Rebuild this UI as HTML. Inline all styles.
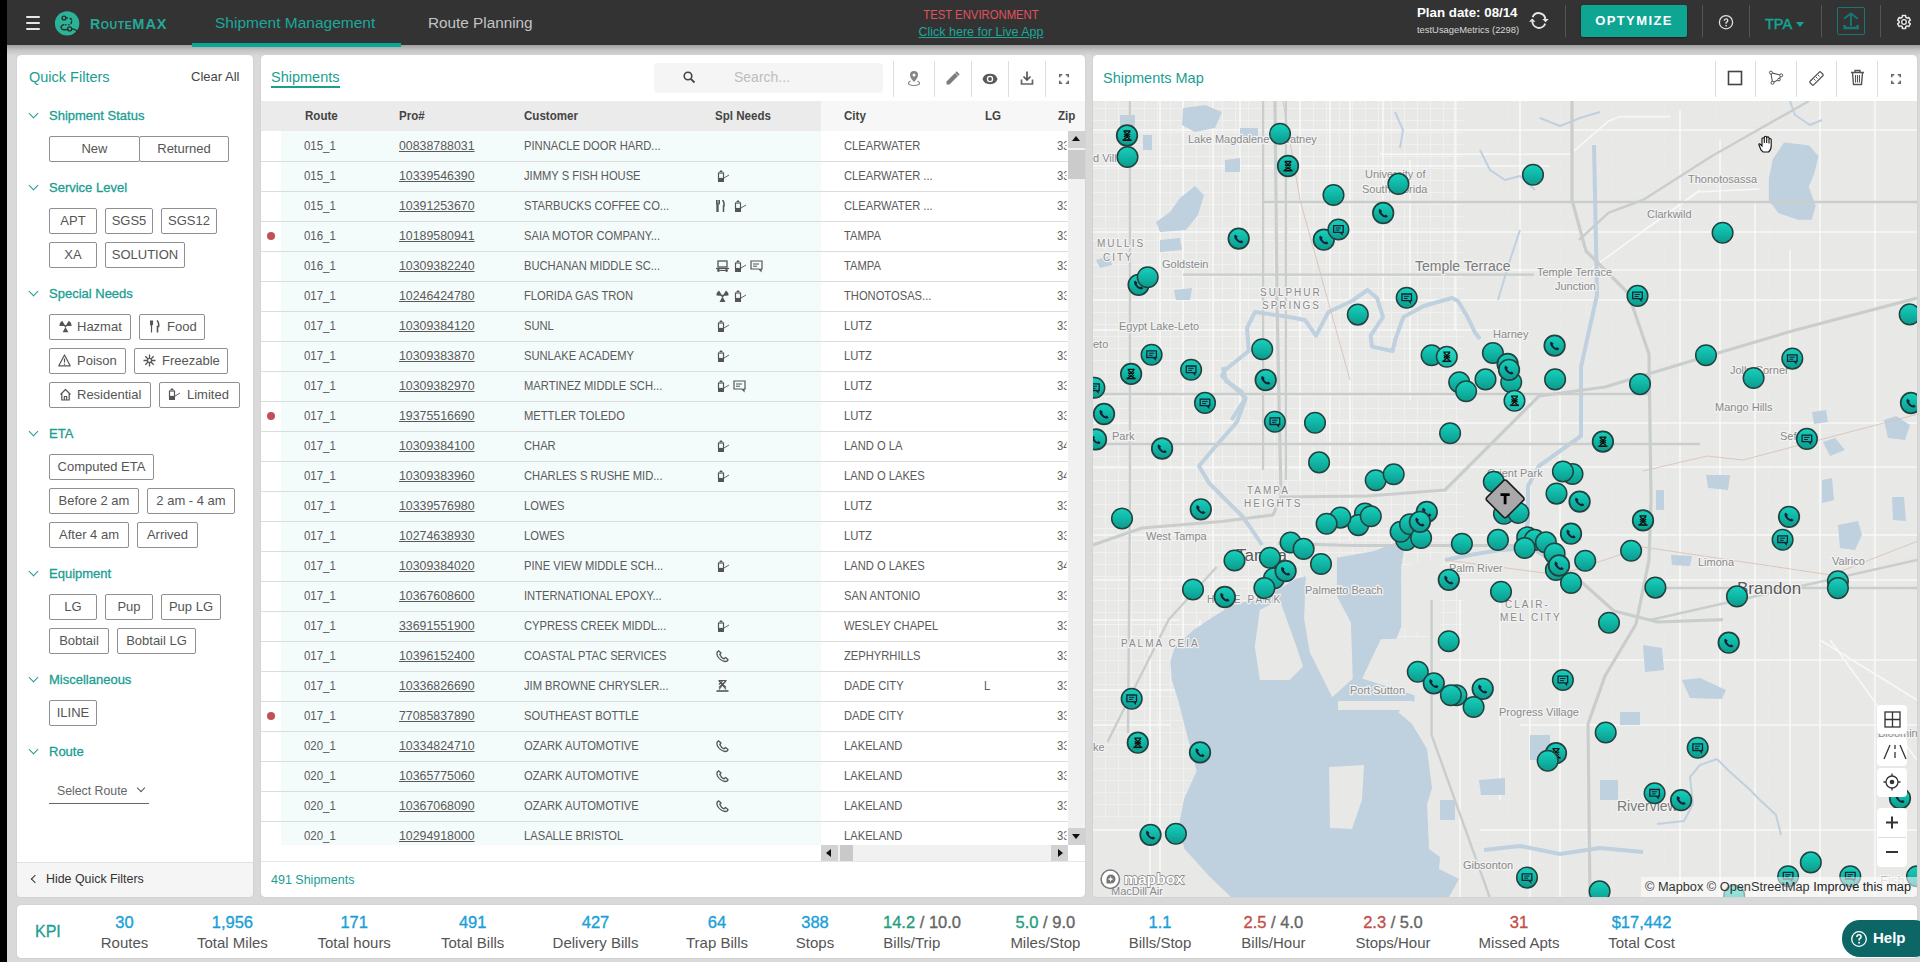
<!DOCTYPE html>
<html><head><meta charset="utf-8">
<style>
*{box-sizing:border-box;margin:0;padding:0}
html,body{width:1920px;height:962px;overflow:hidden}
body{background:#d9d9d9;font-family:"Liberation Sans",sans-serif;position:relative;color:#555}
.a{position:absolute;white-space:nowrap}
#strip{left:0;top:0;width:7px;height:962px;background:#000}
#hdr{left:7px;top:0;width:1913px;height:45px;background:#333}
#hshadow{left:7px;top:45px;width:1913px;height:10px;background:linear-gradient(#9e9e9e,#c4c4c4 50%,#d6d6d6)}
.panel{background:#fff;border-radius:4px;box-shadow:0 0 1px rgba(0,0,0,.25)}
.sep{position:absolute;width:1px;background:#555}
.btn{position:absolute;border:1px solid #8f8f8f;border-radius:2px;font-size:13px;color:#555;text-align:center;line-height:23px;height:26px;white-space:nowrap}
.sh{position:absolute;-webkit-text-stroke:0.3px;font-size:13px;font-weight:normal;color:#1a9e92;white-space:nowrap}
.chev{position:absolute;width:7px;height:7px;border-right:1.5px solid #1a9e92;border-bottom:1.5px solid #1a9e92;transform:rotate(45deg)}
.td{font-size:13px;color:#5a5a5a;line-height:16px;transform:scaleX(0.86);transform-origin:0 50%}
.pro{text-decoration:underline;transform:scaleX(0.95)}
.rt{transform:scaleX(0.88)}
.th{font-size:13px;font-weight:bold;color:#444;line-height:17px;transform:scaleX(0.89);transform-origin:0 50%}
.kv{position:absolute;-webkit-text-stroke:0.35px;font-size:16.5px;line-height:18px;color:#1a9fd9;text-align:center;width:160px;white-space:nowrap}
.kl{position:absolute;font-size:15px;line-height:17px;color:#555;text-align:center;width:160px;white-space:nowrap}
</style></head><body>
<div class="a" id="strip"></div>
<div class="a" id="hdr"></div>
<div class="a" id="hshadow"></div>


<!-- HEADER CONTENT -->
<div class="a" style="left:26px;top:16px;width:14px;height:2px;background:#e6e6e6;border-radius:1px"></div>
<div class="a" style="left:26px;top:22px;width:14px;height:2px;background:#e6e6e6;border-radius:1px"></div>
<div class="a" style="left:26px;top:28px;width:14px;height:2px;background:#e6e6e6;border-radius:1px"></div>
<svg class="a" style="left:54px;top:10px" width="26" height="26" viewBox="0 0 26 26">
 <circle cx="13.1" cy="13.4" r="12.2" fill="#2bb398"/>
 <g fill="none" stroke="#2a2f2e" stroke-width="1.4" stroke-linecap="round">
  <circle cx="10" cy="8" r="1.9"/><circle cx="15.7" cy="18.9" r="2"/>
  <path d="M12.4 7.9 L13.4 8 M16.2 8.4 L17.5 9.4 M17.6 11.3 L17.1 13.5"/>
  <path d="M11.6 14.7 L12 14.7 M14.8 14.7 L15.2 14.7"/>
  <path d="M9.8 14.6 Q7 15.4 7 17.6 Q7.6 19.6 10 19.7 L13.6 19.5"/>
  <path d="M17.8 18.9 Q22 19.2 23.4 21.6 L24.2 23"/>
 </g>
</svg>
<div class="a" id="logo" style="left:90px;top:15px;font-size:14px;font-weight:bold;color:#26a899;letter-spacing:0.6px;line-height:18px">R<span style="font-size:10.5px">OUTE</span><span style="font-size:14.5px;letter-spacing:1px">MAX</span></div>
<div class="a" id="tab1" style="left:215px;top:13px;font-size:15.5px;color:#1ba89a;line-height:20px">Shipment Management</div>
<div class="a" style="left:192px;top:43px;width:209px;height:4px;background:#05a795"></div>
<div class="a" id="tab2" style="left:428px;top:13px;font-size:15.3px;color:#c4c4c4;line-height:20px">Route Planning</div>
<div class="a" id="testenv" style="left:901px;top:7px;width:160px;text-align:center;font-size:13px;color:#e0525e;line-height:15px;transform:scaleX(0.87)">TEST ENVIRONMENT</div>
<div class="a" id="live" style="left:901px;top:24px;width:160px;text-align:center;font-size:13px;color:#1ba89a;text-decoration:underline;line-height:16px;transform:scaleX(0.96)">Click here for Live App</div>
<div class="a" id="plan" style="left:1417px;top:5px;font-size:13.3px;font-weight:bold;color:#fff;line-height:16px">Plan date: 08/14</div>
<div class="a" id="usage" style="left:1417px;top:24px;font-size:9.4px;color:#d8d8d8;line-height:12px">testUsageMetrics (2298)</div>
<svg class="a" style="left:1529px;top:12px" width="21" height="18" viewBox="0 0 21 18">
 <g fill="none" stroke="#e6e6e6" stroke-width="1.9"><path d="M3.6 5.2 A6.6 6.6 0 0 1 16.3 7.6"/><path d="M16.2 11.6 A6.6 6.6 0 0 1 3.4 9.6"/></g>
 <path d="M13.3 7.1 H19.8 L16.5 10.2Z M0 9.7 H6.5 L3.2 6.6Z" fill="#e6e6e6"/>
</svg>
<div class="sep" style="left:1565px;top:5px;height:32px"></div>
<div class="a" style="left:1581px;top:5px;width:106px;height:32px;background:#0ea593;border-radius:2px;box-shadow:0 1px 2px rgba(0,0,0,.4)"></div>
<div class="a" id="opt" style="left:1581px;top:5px;width:106px;height:32px;text-align:center;line-height:32px;font-size:13px;font-weight:bold;color:#fff;letter-spacing:1.4px">OPTYMIZE</div>
<div class="sep" style="left:1702px;top:5px;height:32px"></div>
<svg class="a" style="left:1717px;top:14px" width="18" height="18" viewBox="0 0 18 18">
 <circle cx="9" cy="8.2" r="6.6" fill="none" stroke="#e0e0e0" stroke-width="1.3"/>
 <path d="M7.2 6.8 Q7.3 4.9 9 4.9 Q10.8 4.9 10.8 6.6 Q10.8 7.8 9.2 8.5 L9.1 9.8" fill="none" stroke="#e0e0e0" stroke-width="1.4"/>
 <circle cx="9.1" cy="11.6" r="0.85" fill="#e0e0e0"/>
</svg>
<div class="sep" style="left:1749px;top:5px;height:32px"></div>
<div class="a" id="tpa" style="left:1765px;top:15px;font-size:14.5px;color:#14a596;line-height:18px;-webkit-text-stroke:0.45px">TPA</div>
<div class="a" style="left:1796px;top:22px;width:0;height:0;border-left:4px solid transparent;border-right:4px solid transparent;border-top:5px solid #14a596"></div>
<div class="sep" style="left:1821px;top:5px;height:32px"></div>
<div class="a" style="left:1837px;top:7px;width:28px;height:28px;border:1.4px solid #177676;border-radius:1.5px"></div>
<svg class="a" style="left:1837px;top:7px" width="28" height="28" viewBox="1837 7 28 28">
 <g fill="none" stroke="#177676" stroke-width="2" stroke-linecap="round"><path d="M1850.9 13.8 V25.2 M1844.6 18.2 L1850.9 13.4 L1857.2 18.2"/></g>
 <path d="M1844.6 25 V28 H1857.6 V25" fill="none" stroke="#177676" stroke-width="2.6"/>
</svg>
<div class="sep" style="left:1880px;top:5px;height:32px"></div>
<svg class="a" style="left:1895px;top:13px" width="18" height="18" viewBox="0 0 18 18">
 <path d="M7.16 4.46 L7.40 2.60 L10.60 2.60 L10.84 4.46 L12.02 5.14 L13.75 4.42 L15.34 7.18 L13.85 8.32 L13.85 9.68 L15.34 10.82 L13.75 13.58 L12.02 12.86 L10.84 13.54 L10.60 15.40 L7.40 15.40 L7.16 13.54 L5.98 12.86 L4.25 13.58 L2.66 10.82 L4.15 9.68 L4.15 8.32 L2.66 7.18 L4.25 4.42 L5.98 5.14Z" fill="none" stroke="#e8e8e8" stroke-width="1.5" stroke-linejoin="round"/>
 <circle cx="9" cy="9" r="2.3" fill="none" stroke="#e8e8e8" stroke-width="1.3"/><circle cx="9" cy="9" r="0.9" fill="#111"/>
</svg>

<!-- LEFT PANEL -->
<div class="a panel" style="left:17px;top:55px;width:236px;height:842px"></div>

<!-- LEFT CONTENT -->

<div class="a" style="left:29px;top:68px;font-size:14.5px;color:#1a9e92;line-height:18px">Quick Filters</div>
<div class="a" style="left:191px;top:69px;font-size:13px;color:#444;line-height:16px">Clear All</div>
<div class="chev" style="left:30px;top:110px"></div><div class="sh" style="left:49px;top:107px;line-height:17px">Shipment Status</div>
<div class="btn" style="left:49px;top:136px;width:91px">New</div><div class="btn" style="left:139px;top:136px;width:90px">Returned</div>
<div class="chev" style="left:30px;top:182px"></div><div class="sh" style="left:49px;top:179px;line-height:17px">Service Level</div>
<div class="btn" style="left:49px;top:208px;width:48px">APT</div>
<div class="btn" style="left:105px;top:208px;width:48px">SGS5</div>
<div class="btn" style="left:161px;top:208px;width:56px">SGS12</div>
<div class="btn" style="left:49px;top:242px;width:48px">XA</div>
<div class="btn" style="left:105px;top:242px;width:80px">SOLUTION</div>
<div class="chev" style="left:30px;top:288px"></div><div class="sh" style="left:49px;top:285px;line-height:17px">Special Needs</div>
<div class="btn" style="left:49px;top:314px;width:82px"></div>
<svg class="a" style="left:59px;top:320px" width="13" height="13" viewBox="0 0 13 13"><g fill="#555"><path d="M6.5 6 L3.2 0.8 Q0.5 2.3 0.4 6Z M6.5 6 L9.8 0.8 Q12.5 2.3 12.6 6Z M6.5 7 L3.6 12.2 H9.4Z"/><circle cx="6.5" cy="6.3" r="1.1"/></g></svg><div class="a" style="left:77px;top:319px;font-size:13px;color:#555;line-height:16px">Hazmat</div>
<div class="btn" style="left:139px;top:314px;width:66px"></div>
<svg class="a" style="left:150px;top:320px" width="10" height="13" viewBox="0 0 10 13"><path d="M1.5 0.5 V12.5 M0.5 0.5 V4 Q0.5 5 1.5 5 Q2.5 5 2.5 4 V0.5" stroke="#555" stroke-width="1.2" fill="none"/><path d="M7 0.5 Q9.2 2.5 8.6 6.5 H7.5 V12.5" stroke="#555" stroke-width="1.6" fill="none"/></svg><div class="a" style="left:167px;top:319px;font-size:13px;color:#555;line-height:16px">Food</div>
<div class="btn" style="left:49px;top:348px;width:77px"></div>
<svg class="a" style="left:58px;top:354px" width="13" height="13" viewBox="0 0 13 13"><path d="M6.5 1 L12.2 11.8 H0.8Z" fill="none" stroke="#555" stroke-width="1.2" stroke-linejoin="round"/><path d="M6.5 4.5 V8.5" stroke="#555" stroke-width="1.2"/><circle cx="6.5" cy="10.2" r="0.7" fill="#555"/></svg><div class="a" style="left:77px;top:353px;font-size:13px;color:#555;line-height:16px">Poison</div>
<div class="btn" style="left:134px;top:348px;width:94px"></div>
<svg class="a" style="left:143px;top:354px" width="13" height="13" viewBox="0 0 13 13"><path d="M6.5 0.5 V12.5 M0.5 6.5 H12.5 M2.3 2.3 L10.7 10.7 M10.7 2.3 L2.3 10.7" stroke="#555" stroke-width="1.3"/><circle cx="6.5" cy="6.5" r="2" fill="#fff" stroke="#555" stroke-width="1.2"/></svg><div class="a" style="left:162px;top:353px;font-size:13px;color:#555;line-height:16px">Freezable</div>
<div class="btn" style="left:49px;top:382px;width:102px"></div>
<svg class="a" style="left:59px;top:388px" width="13" height="13" viewBox="0 0 13 13"><path d="M1.5 6.5 L6.5 1.5 L11.5 6.5 M2.8 5.5 V12 H10.2 V5.5 M5.3 12 V8.5 H7.7 V12" fill="none" stroke="#555" stroke-width="1.2" stroke-linejoin="round"/></svg><div class="a" style="left:77px;top:387px;font-size:13px;color:#555;line-height:16px">Residential</div>
<div class="btn" style="left:159px;top:382px;width:81px"></div>
<svg class="a" style="left:167px;top:388px" width="14" height="13" viewBox="0 0 14 13"><use href="#lim"/></svg><div class="a" style="left:187px;top:387px;font-size:13px;color:#555;line-height:16px">Limited</div>
<div class="chev" style="left:30px;top:428px"></div><div class="sh" style="left:49px;top:425px;line-height:17px">ETA</div>
<div class="btn" style="left:49px;top:454px;width:105px">Computed ETA</div>
<div class="btn" style="left:49px;top:488px;width:90px">Before 2 am</div>
<div class="btn" style="left:147px;top:488px;width:88px">2 am - 4 am</div>
<div class="btn" style="left:49px;top:522px;width:80px">After 4 am</div>
<div class="btn" style="left:137px;top:522px;width:61px">Arrived</div>
<div class="chev" style="left:30px;top:568px"></div><div class="sh" style="left:49px;top:565px;line-height:17px">Equipment</div>
<div class="btn" style="left:49px;top:594px;width:48px">LG</div>
<div class="btn" style="left:105px;top:594px;width:48px">Pup</div>
<div class="btn" style="left:161px;top:594px;width:60px">Pup LG</div>
<div class="btn" style="left:49px;top:628px;width:60px">Bobtail</div>
<div class="btn" style="left:117px;top:628px;width:79px">Bobtail LG</div>
<div class="chev" style="left:30px;top:674px"></div><div class="sh" style="left:49px;top:671px;line-height:17px">Miscellaneous</div>
<div class="btn" style="left:49px;top:700px;width:48px">ILINE</div>
<div class="chev" style="left:30px;top:746px"></div><div class="sh" style="left:49px;top:743px;line-height:17px">Route</div>
<div class="a" style="left:57px;top:783px;font-size:12.3px;color:#666;line-height:16px">Select Route</div>
<div class="a" style="left:138px;top:785px;width:6px;height:6px;border-right:1.4px solid #555;border-bottom:1.4px solid #555;transform:rotate(45deg)"></div>
<div class="a" style="left:49px;top:803px;width:100px;height:1px;background:#666"></div>
<div class="a" style="left:17px;top:862px;width:236px;height:35px;background:#f5f5f5;border-top:1px solid #e0e0e0;border-radius:0 0 4px 4px"></div>
<div class="a" style="left:32px;top:876px;width:6px;height:6px;border-left:1.5px solid #333;border-bottom:1.5px solid #333;transform:rotate(45deg)"></div>
<div class="a" style="left:46px;top:871px;font-size:12.4px;color:#333;line-height:16px">Hide Quick Filters</div>

<!-- TABLE PANEL -->
<div class="a panel" style="left:261px;top:55px;width:824px;height:842px"></div>

<!-- TABLE CONTENT -->
<svg width="0" height="0" style="position:absolute">
<defs>
<g id="lim"><path d="M5 0 L7 2 L3 2Z" fill="#555"/><rect x="2.5" y="3" width="5" height="5.5" fill="none" stroke="#555" stroke-width="1.2"/><rect x="2" y="8.5" width="6" height="3.5" fill="#555"/><path d="M8 8 L13 5" stroke="#555" stroke-width="0.9"/></g>
<g id="food"><path d="M1 0 V12 M3 0 V4 M2 4 V12" stroke="#555" stroke-width="1.3"/><path d="M0.5 0 V4 H3.5 V0" fill="none" stroke="#555" stroke-width="1"/><path d="M6.5 0 Q8.5 2 8 6 L7.5 6 V12" stroke="#555" stroke-width="1.5" fill="none"/></g>
<g id="bus"><rect x="2" y="1" width="9" height="6" fill="none" stroke="#555" stroke-width="1.3"/><path d="M0 8.5 H13" stroke="#555" stroke-width="1.3"/><circle cx="2.5" cy="10.5" r="1.4" fill="#555"/><circle cx="10.5" cy="10.5" r="1.4" fill="#555"/><path d="M4 10.5 H9" stroke="#555" stroke-width="1"/></g>
<g id="msg"><path d="M1 1 H12 V9 H11 V11 L9 9 H1Z" fill="none" stroke="#555" stroke-width="1.2"/><path d="M3 4 H9 M3 6.2 H7" stroke="#555" stroke-width="1"/></g>
<g id="haz" fill="#555"><path d="M6.5 6 L3 0.5 Q0.5 2 0.5 5.5Z M6.5 6 L10 0.5 Q12.5 2 12.5 5.5Z M6.5 6.5 L3.5 12 H9.5Z"/><circle cx="6.5" cy="6" r="1.2"/></g>
<g id="phone"><path d="M2.5 0.8 Q0 2 1.5 6 Q4 10.5 9 11.5 Q11.8 11.5 12 9.5 L9.5 7.5 L8 8.8 Q5 7.5 3.8 4.5 L5 3 Z" fill="none" stroke="#555" stroke-width="1.3" stroke-linejoin="round"/></g>
<g id="hg"><path d="M2.5 0.5 H10.5 M3 1 L10 7.5 M10 1 L3 7.5 M3 7.5 L6.5 4 L10 7.5 M3 4.5 L6.5 1" stroke="#555" stroke-width="1.2" fill="none"/><path d="M0.5 11 H12.5" stroke="#555" stroke-width="1.6"/><path d="M3 0.5 L10 9.5 M10 0.5 L3 9.5" stroke="#555" stroke-width="1.1" fill="none"/></g>
</defs></svg>
<div class="a" style="left:261px;top:101px;width:560px;height:30px;background:#ebebeb"></div>
<div class="a" style="left:821px;top:101px;width:264px;height:30px;background:#f7f7f7"></div>
<div class="a" style="left:281px;top:131px;width:540px;height:714px;background:#f4fbfb"></div>
<div class="a th" style="left:305px;top:107px">Route</div>
<div class="a th" style="left:399px;top:107px">Pro#</div>
<div class="a th" style="left:524px;top:107px">Customer</div>
<div class="a th" style="left:715px;top:107px">Spl Needs</div>
<div class="a th" style="left:844px;top:107px">City</div>
<div class="a th" style="left:985px;top:107px">LG</div>
<div class="a th" style="left:1058px;top:107px">Zip</div>
<div class="a" style="left:261px;top:161px;width:807px;height:1px;background:#dcdcdc"></div>
<div class="a td rt" style="left:304px;top:138px">015_1</div>
<div class="a td pro" style="left:399px;top:138px">00838788031</div>
<div class="a td" style="left:524px;top:138px">PINNACLE DOOR HARD...</div>
<div class="a td" style="left:844px;top:138px">CLEARWATER</div>
<div class="a td" style="left:1057px;top:138px;width:11px;overflow:hidden">33</div>
<div class="a" style="left:261px;top:191px;width:807px;height:1px;background:#dcdcdc"></div>
<div class="a td rt" style="left:304px;top:168px">015_1</div>
<div class="a td pro" style="left:399px;top:168px">10339546390</div>
<div class="a td" style="left:524px;top:168px">JIMMY S FISH HOUSE</div>
<svg class="a" style="left:716px;top:170px" width="14" height="13"><use href="#lim"/></svg>
<div class="a td" style="left:844px;top:168px">CLEARWATER ...</div>
<div class="a td" style="left:1057px;top:168px;width:11px;overflow:hidden">33</div>
<div class="a" style="left:261px;top:221px;width:807px;height:1px;background:#dcdcdc"></div>
<div class="a td rt" style="left:304px;top:198px">015_1</div>
<div class="a td pro" style="left:399px;top:198px">10391253670</div>
<div class="a td" style="left:524px;top:198px">STARBUCKS COFFEE CO...</div>
<svg class="a" style="left:716px;top:200px" width="14" height="13"><use href="#food"/></svg>
<svg class="a" style="left:733px;top:200px" width="14" height="13"><use href="#lim"/></svg>
<div class="a td" style="left:844px;top:198px">CLEARWATER ...</div>
<div class="a td" style="left:1057px;top:198px;width:11px;overflow:hidden">33</div>
<div class="a" style="left:261px;top:251px;width:807px;height:1px;background:#dcdcdc"></div>
<div class="a" style="left:267px;top:232px;width:8px;height:8px;border-radius:50%;background:#c0505a"></div>
<div class="a td rt" style="left:304px;top:228px">016_1</div>
<div class="a td pro" style="left:399px;top:228px">10189580941</div>
<div class="a td" style="left:524px;top:228px">SAIA MOTOR COMPANY...</div>
<div class="a td" style="left:844px;top:228px">TAMPA</div>
<div class="a td" style="left:1057px;top:228px;width:11px;overflow:hidden">33</div>
<div class="a" style="left:261px;top:281px;width:807px;height:1px;background:#dcdcdc"></div>
<div class="a td rt" style="left:304px;top:258px">016_1</div>
<div class="a td pro" style="left:399px;top:258px">10309382240</div>
<div class="a td" style="left:524px;top:258px">BUCHANAN MIDDLE SC...</div>
<svg class="a" style="left:716px;top:260px" width="14" height="13"><use href="#bus"/></svg>
<svg class="a" style="left:733px;top:260px" width="14" height="13"><use href="#lim"/></svg>
<svg class="a" style="left:750px;top:260px" width="14" height="13"><use href="#msg"/></svg>
<div class="a td" style="left:844px;top:258px">TAMPA</div>
<div class="a td" style="left:1057px;top:258px;width:11px;overflow:hidden">33</div>
<div class="a" style="left:261px;top:311px;width:807px;height:1px;background:#dcdcdc"></div>
<div class="a td rt" style="left:304px;top:288px">017_1</div>
<div class="a td pro" style="left:399px;top:288px">10246424780</div>
<div class="a td" style="left:524px;top:288px">FLORIDA GAS TRON</div>
<svg class="a" style="left:716px;top:290px" width="14" height="13"><use href="#haz"/></svg>
<svg class="a" style="left:733px;top:290px" width="14" height="13"><use href="#lim"/></svg>
<div class="a td" style="left:844px;top:288px">THONOTOSAS...</div>
<div class="a td" style="left:1057px;top:288px;width:11px;overflow:hidden">33</div>
<div class="a" style="left:261px;top:341px;width:807px;height:1px;background:#dcdcdc"></div>
<div class="a td rt" style="left:304px;top:318px">017_1</div>
<div class="a td pro" style="left:399px;top:318px">10309384120</div>
<div class="a td" style="left:524px;top:318px">SUNL</div>
<svg class="a" style="left:716px;top:320px" width="14" height="13"><use href="#lim"/></svg>
<div class="a td" style="left:844px;top:318px">LUTZ</div>
<div class="a td" style="left:1057px;top:318px;width:11px;overflow:hidden">33</div>
<div class="a" style="left:261px;top:371px;width:807px;height:1px;background:#dcdcdc"></div>
<div class="a td rt" style="left:304px;top:348px">017_1</div>
<div class="a td pro" style="left:399px;top:348px">10309383870</div>
<div class="a td" style="left:524px;top:348px">SUNLAKE ACADEMY</div>
<svg class="a" style="left:716px;top:350px" width="14" height="13"><use href="#lim"/></svg>
<div class="a td" style="left:844px;top:348px">LUTZ</div>
<div class="a td" style="left:1057px;top:348px;width:11px;overflow:hidden">33</div>
<div class="a" style="left:261px;top:401px;width:807px;height:1px;background:#dcdcdc"></div>
<div class="a td rt" style="left:304px;top:378px">017_1</div>
<div class="a td pro" style="left:399px;top:378px">10309382970</div>
<div class="a td" style="left:524px;top:378px">MARTINEZ MIDDLE SCH...</div>
<svg class="a" style="left:716px;top:380px" width="14" height="13"><use href="#lim"/></svg>
<svg class="a" style="left:733px;top:380px" width="14" height="13"><use href="#msg"/></svg>
<div class="a td" style="left:844px;top:378px">LUTZ</div>
<div class="a td" style="left:1057px;top:378px;width:11px;overflow:hidden">33</div>
<div class="a" style="left:261px;top:431px;width:807px;height:1px;background:#dcdcdc"></div>
<div class="a" style="left:267px;top:412px;width:8px;height:8px;border-radius:50%;background:#c0505a"></div>
<div class="a td rt" style="left:304px;top:408px">017_1</div>
<div class="a td pro" style="left:399px;top:408px">19375516690</div>
<div class="a td" style="left:524px;top:408px">METTLER TOLEDO</div>
<div class="a td" style="left:844px;top:408px">LUTZ</div>
<div class="a td" style="left:1057px;top:408px;width:11px;overflow:hidden">33</div>
<div class="a" style="left:261px;top:461px;width:807px;height:1px;background:#dcdcdc"></div>
<div class="a td rt" style="left:304px;top:438px">017_1</div>
<div class="a td pro" style="left:399px;top:438px">10309384100</div>
<div class="a td" style="left:524px;top:438px">CHAR</div>
<svg class="a" style="left:716px;top:440px" width="14" height="13"><use href="#lim"/></svg>
<div class="a td" style="left:844px;top:438px">LAND O LA</div>
<div class="a td" style="left:1057px;top:438px;width:11px;overflow:hidden">34</div>
<div class="a" style="left:261px;top:491px;width:807px;height:1px;background:#dcdcdc"></div>
<div class="a td rt" style="left:304px;top:468px">017_1</div>
<div class="a td pro" style="left:399px;top:468px">10309383960</div>
<div class="a td" style="left:524px;top:468px">CHARLES S RUSHE MID...</div>
<svg class="a" style="left:716px;top:470px" width="14" height="13"><use href="#lim"/></svg>
<div class="a td" style="left:844px;top:468px">LAND O LAKES</div>
<div class="a td" style="left:1057px;top:468px;width:11px;overflow:hidden">34</div>
<div class="a" style="left:261px;top:521px;width:807px;height:1px;background:#dcdcdc"></div>
<div class="a td rt" style="left:304px;top:498px">017_1</div>
<div class="a td pro" style="left:399px;top:498px">10339576980</div>
<div class="a td" style="left:524px;top:498px">LOWES</div>
<div class="a td" style="left:844px;top:498px">LUTZ</div>
<div class="a td" style="left:1057px;top:498px;width:11px;overflow:hidden">33</div>
<div class="a" style="left:261px;top:551px;width:807px;height:1px;background:#dcdcdc"></div>
<div class="a td rt" style="left:304px;top:528px">017_1</div>
<div class="a td pro" style="left:399px;top:528px">10274638930</div>
<div class="a td" style="left:524px;top:528px">LOWES</div>
<div class="a td" style="left:844px;top:528px">LUTZ</div>
<div class="a td" style="left:1057px;top:528px;width:11px;overflow:hidden">33</div>
<div class="a" style="left:261px;top:581px;width:807px;height:1px;background:#dcdcdc"></div>
<div class="a td rt" style="left:304px;top:558px">017_1</div>
<div class="a td pro" style="left:399px;top:558px">10309384020</div>
<div class="a td" style="left:524px;top:558px">PINE VIEW MIDDLE SCH...</div>
<svg class="a" style="left:716px;top:560px" width="14" height="13"><use href="#lim"/></svg>
<div class="a td" style="left:844px;top:558px">LAND O LAKES</div>
<div class="a td" style="left:1057px;top:558px;width:11px;overflow:hidden">34</div>
<div class="a" style="left:261px;top:611px;width:807px;height:1px;background:#dcdcdc"></div>
<div class="a td rt" style="left:304px;top:588px">017_1</div>
<div class="a td pro" style="left:399px;top:588px">10367608600</div>
<div class="a td" style="left:524px;top:588px">INTERNATIONAL EPOXY...</div>
<div class="a td" style="left:844px;top:588px">SAN ANTONIO</div>
<div class="a td" style="left:1057px;top:588px;width:11px;overflow:hidden">33</div>
<div class="a" style="left:261px;top:641px;width:807px;height:1px;background:#dcdcdc"></div>
<div class="a td rt" style="left:304px;top:618px">017_1</div>
<div class="a td pro" style="left:399px;top:618px">33691551900</div>
<div class="a td" style="left:524px;top:618px">CYPRESS CREEK MIDDL...</div>
<svg class="a" style="left:716px;top:620px" width="14" height="13"><use href="#lim"/></svg>
<div class="a td" style="left:844px;top:618px">WESLEY CHAPEL</div>
<div class="a td" style="left:1057px;top:618px;width:11px;overflow:hidden">33</div>
<div class="a" style="left:261px;top:671px;width:807px;height:1px;background:#dcdcdc"></div>
<div class="a td rt" style="left:304px;top:648px">017_1</div>
<div class="a td pro" style="left:399px;top:648px">10396152400</div>
<div class="a td" style="left:524px;top:648px">COASTAL PTAC SERVICES</div>
<svg class="a" style="left:716px;top:650px" width="14" height="13"><use href="#phone"/></svg>
<div class="a td" style="left:844px;top:648px">ZEPHYRHILLS</div>
<div class="a td" style="left:1057px;top:648px;width:11px;overflow:hidden">33</div>
<div class="a" style="left:261px;top:701px;width:807px;height:1px;background:#dcdcdc"></div>
<div class="a td rt" style="left:304px;top:678px">017_1</div>
<div class="a td pro" style="left:399px;top:678px">10336826690</div>
<div class="a td" style="left:524px;top:678px">JIM BROWNE CHRYSLER...</div>
<svg class="a" style="left:716px;top:680px" width="14" height="13"><use href="#hg"/></svg>
<div class="a td" style="left:844px;top:678px">DADE CITY</div>
<div class="a td" style="left:984px;top:678px">L</div>
<div class="a td" style="left:1057px;top:678px;width:11px;overflow:hidden">33</div>
<div class="a" style="left:261px;top:731px;width:807px;height:1px;background:#dcdcdc"></div>
<div class="a" style="left:267px;top:712px;width:8px;height:8px;border-radius:50%;background:#c0505a"></div>
<div class="a td rt" style="left:304px;top:708px">017_1</div>
<div class="a td pro" style="left:399px;top:708px">77085837890</div>
<div class="a td" style="left:524px;top:708px">SOUTHEAST BOTTLE</div>
<div class="a td" style="left:844px;top:708px">DADE CITY</div>
<div class="a td" style="left:1057px;top:708px;width:11px;overflow:hidden">33</div>
<div class="a" style="left:261px;top:761px;width:807px;height:1px;background:#dcdcdc"></div>
<div class="a td rt" style="left:304px;top:738px">020_1</div>
<div class="a td pro" style="left:399px;top:738px">10334824710</div>
<div class="a td" style="left:524px;top:738px">OZARK AUTOMOTIVE</div>
<svg class="a" style="left:716px;top:740px" width="14" height="13"><use href="#phone"/></svg>
<div class="a td" style="left:844px;top:738px">LAKELAND</div>
<div class="a td" style="left:1057px;top:738px;width:11px;overflow:hidden">33</div>
<div class="a" style="left:261px;top:791px;width:807px;height:1px;background:#dcdcdc"></div>
<div class="a td rt" style="left:304px;top:768px">020_1</div>
<div class="a td pro" style="left:399px;top:768px">10365775060</div>
<div class="a td" style="left:524px;top:768px">OZARK AUTOMOTIVE</div>
<svg class="a" style="left:716px;top:770px" width="14" height="13"><use href="#phone"/></svg>
<div class="a td" style="left:844px;top:768px">LAKELAND</div>
<div class="a td" style="left:1057px;top:768px;width:11px;overflow:hidden">33</div>
<div class="a" style="left:261px;top:821px;width:807px;height:1px;background:#dcdcdc"></div>
<div class="a td rt" style="left:304px;top:798px">020_1</div>
<div class="a td pro" style="left:399px;top:798px">10367068090</div>
<div class="a td" style="left:524px;top:798px">OZARK AUTOMOTIVE</div>
<svg class="a" style="left:716px;top:800px" width="14" height="13"><use href="#phone"/></svg>
<div class="a td" style="left:844px;top:798px">LAKELAND</div>
<div class="a td" style="left:1057px;top:798px;width:11px;overflow:hidden">33</div>
<div class="a td rt" style="left:304px;top:828px">020_1</div>
<div class="a td pro" style="left:399px;top:828px">10294918000</div>
<div class="a td" style="left:524px;top:828px">LASALLE BRISTOL</div>
<div class="a td" style="left:844px;top:828px">LAKELAND</div>
<div class="a td" style="left:1057px;top:828px;width:11px;overflow:hidden">33</div>
<div class="a" style="left:1068px;top:131px;width:17px;height:714px;background:#f1f1f1"></div>
<div class="a" style="left:1068px;top:131px;width:17px;height:17px;background:#d2d2d2"></div>
<div class="a" style="left:1068px;top:150px;width:17px;height:29px;background:#cbcbcb"></div>
<div class="a" style="left:1072px;top:136px;width:0;height:0;border-left:4px solid transparent;border-right:4px solid transparent;border-bottom:5px solid #111"></div>
<div class="a" style="left:1068px;top:828px;width:17px;height:17px;background:#d2d2d2"></div>
<div class="a" style="left:1072px;top:834px;width:0;height:0;border-left:4px solid transparent;border-right:4px solid transparent;border-top:5px solid #111"></div>
<div class="a" style="left:821px;top:845px;width:247px;height:16px;background:#f1f1f1"></div>
<div class="a" style="left:821px;top:845px;width:17px;height:16px;background:#d2d2d2"></div>
<div class="a" style="left:826px;top:849px;width:0;height:0;border-top:4px solid transparent;border-bottom:4px solid transparent;border-right:5px solid #111"></div>
<div class="a" style="left:840px;top:845px;width:13px;height:16px;background:#c9c9c9"></div>
<div class="a" style="left:1051px;top:845px;width:17px;height:16px;background:#d2d2d2"></div>
<div class="a" style="left:1058px;top:849px;width:0;height:0;border-top:4px solid transparent;border-bottom:4px solid transparent;border-left:5px solid #111"></div>
<div class="a" style="left:261px;top:861px;width:824px;height:1px;background:#e6e6e6"></div>
<div class="a" style="left:271px;top:872px;font-size:12.5px;color:#1a9e92;line-height:16px">491 Shipments</div>
<div class="a" style="left:271px;top:68px;font-size:14.5px;color:#1a9e92;line-height:18px;border-bottom:2px solid #1a9e92;padding-bottom:0px">Shipments</div>
<div class="a" style="left:654px;top:63px;width:229px;height:30px;background:#f5f5f5;border-radius:4px"></div>
<svg class="a" style="left:683px;top:71px" width="13" height="13" viewBox="0 0 13 13"><circle cx="5" cy="5" r="3.8" fill="none" stroke="#444" stroke-width="1.6"/><path d="M7.8 7.8 L11.5 11.5" stroke="#444" stroke-width="1.8"/></svg>
<div class="a" style="left:734px;top:69px;font-size:14px;color:#bdbdbd;line-height:17px">Search...</div>
<div class="a" style="left:893px;top:61px;width:1px;height:36px;background:#dedede"></div>
<div class="a" style="left:934px;top:61px;width:1px;height:36px;background:#dedede"></div>
<div class="a" style="left:971px;top:61px;width:1px;height:36px;background:#dedede"></div>
<div class="a" style="left:1008px;top:61px;width:1px;height:36px;background:#dedede"></div>
<div class="a" style="left:1045px;top:61px;width:1px;height:36px;background:#dedede"></div>
<svg class="a" style="left:906px;top:70px" width="16" height="17" viewBox="0 0 16 17"><path d="M8 1 Q12 1 12 5 Q12 8 8 12 Q4 8 4 5 Q4 1 8 1Z" fill="#858585"/><circle cx="8" cy="5" r="1.5" fill="#fff"/><path d="M4.5 11 Q1.5 12.5 3 14.5 Q8 16.5 13 14.5 Q14.5 12.5 11.5 11" fill="none" stroke="#858585" stroke-width="1.2"/></svg>
<svg class="a" style="left:945px;top:71px" width="15" height="15" viewBox="0 0 15 15"><path d="M1.5 13.5 L1.5 10.5 L10 2 L13 5 L4.5 13.5Z" fill="#7d7d7d"/><path d="M11 1 L14 4" stroke="#7d7d7d" stroke-width="1.8"/></svg>
<svg class="a" style="left:981px;top:73px" width="18" height="12" viewBox="0 0 18 12"><path d="M1.5 6 Q3 0.8 9 0.8 Q15 0.8 16.5 6 Q15 11.2 9 11.2 Q3 11.2 1.5 6Z" fill="#595959"/><circle cx="9" cy="6" r="3.2" fill="#fff"/><circle cx="9" cy="6" r="1.9" fill="#555"/></svg>
<svg class="a" style="left:1019px;top:70px" width="16" height="16" viewBox="0 0 16 16"><path d="M8 1.5 V10 M4.5 6.5 L8 10 L11.5 6.5" fill="none" stroke="#555" stroke-width="1.7"/><path d="M2.5 9.5 V14 H13.5 V9.5" fill="none" stroke="#666" stroke-width="1.7"/></svg>
<svg class="a" style="left:1058px;top:73px" width="12" height="12" viewBox="0 0 12 12"><path d="M1.8 4.2 V1.8 H4.2 M7.8 1.8 H10.2 V4.2 M10.2 7.8 V10.2 H7.8 M4.2 10.2 H1.8 V7.8" fill="none" stroke="#666" stroke-width="1.6"/></svg>

<!-- MAP PANEL -->
<div class="a panel" style="left:1093px;top:55px;width:824px;height:842px"></div>

<!-- MAP CONTENT -->
<div class="a" style="left:1093px;top:101px;width:824px;height:796px;overflow:hidden;border-radius:0 0 4px 4px">
<svg style="position:absolute;left:0;top:0" width="824" height="796" viewBox="1093 101 824 796" font-family="Liberation Sans, sans-serif">
<rect x="1093" y="101" width="824" height="796" fill="#e8e8e7"/>
<defs>
<pattern id="grid1" x="0" y="0" width="13" height="12" patternUnits="userSpaceOnUse"><path d="M0 0.5 H13 M0.5 0 V12" stroke="#f6f6f6" stroke-width="1"/></pattern>
<pattern id="grid2" x="0" y="0" width="26" height="24" patternUnits="userSpaceOnUse"><path d="M0 0.5 H26 M0.5 0 V24" stroke="#f4f4f4" stroke-width="1"/></pattern>
<linearGradient id="mg" x1="0" y1="0" x2="0" y2="1"><stop offset="0" stop-color="#16d2be"/><stop offset="1" stop-color="#0b9a8c"/></linearGradient>
<linearGradient id="mgl" x1="0" y1="0" x2="0" y2="1"><stop offset="0" stop-color="#2ae0cc"/><stop offset="1" stop-color="#13b8a8"/></linearGradient>
</defs>
<rect x="1093" y="101" width="370" height="540" fill="url(#grid1)" opacity="0.55"/>
<rect x="1093" y="620" width="110" height="200" fill="url(#grid1)" opacity="0.5"/>
<rect x="1460" y="101" width="457" height="796" fill="url(#grid2)" opacity="0.18"/>
<polyline points="1160.0,101.0 1160.0,897.0" fill="none" stroke="#f8f8f8" stroke-width="1.6"/>
<polyline points="1183.0,101.0 1183.0,640.0" fill="none" stroke="#f8f8f8" stroke-width="1.6"/>
<polyline points="1213.0,101.0 1213.0,600.0" fill="none" stroke="#f8f8f8" stroke-width="1.6"/>
<polyline points="1240.0,101.0 1240.0,420.0" fill="none" stroke="#f8f8f8" stroke-width="1.6"/>
<polyline points="1300.0,101.0 1300.0,480.0" fill="none" stroke="#f8f8f8" stroke-width="1.6"/>
<polyline points="1330.0,101.0 1330.0,470.0" fill="none" stroke="#f8f8f8" stroke-width="1.6"/>
<polyline points="1350.0,101.0 1350.0,540.0" fill="none" stroke="#f8f8f8" stroke-width="1.6"/>
<polyline points="1383.0,101.0 1383.0,300.0" fill="none" stroke="#f8f8f8" stroke-width="1.6"/>
<polyline points="1410.0,160.0 1410.0,400.0" fill="none" stroke="#f8f8f8" stroke-width="1.6"/>
<polyline points="1455.0,101.0 1455.0,330.0" fill="none" stroke="#f8f8f8" stroke-width="1.6"/>
<polyline points="1520.0,101.0 1520.0,360.0" fill="none" stroke="#f8f8f8" stroke-width="1.6"/>
<polyline points="1560.0,370.0 1560.0,897.0" fill="none" stroke="#f8f8f8" stroke-width="1.6"/>
<polyline points="1680.0,110.0 1680.0,897.0" fill="none" stroke="#f8f8f8" stroke-width="1.6"/>
<polyline points="1720.0,140.0 1720.0,897.0" fill="none" stroke="#f8f8f8" stroke-width="1.6"/>
<polyline points="1755.0,200.0 1755.0,897.0" fill="none" stroke="#f8f8f8" stroke-width="1.6"/>
<polyline points="1790.0,250.0 1790.0,897.0" fill="none" stroke="#f8f8f8" stroke-width="1.6"/>
<polyline points="1820.0,101.0 1820.0,897.0" fill="none" stroke="#f8f8f8" stroke-width="1.6"/>
<polyline points="1875.0,101.0 1875.0,897.0" fill="none" stroke="#f8f8f8" stroke-width="1.6"/>
<polyline points="1530.0,400.0 1530.0,897.0" fill="none" stroke="#f8f8f8" stroke-width="1.6"/>
<polyline points="1460.0,600.0 1460.0,897.0" fill="none" stroke="#f8f8f8" stroke-width="1.6"/>
<polyline points="1500.0,600.0 1500.0,800.0" fill="none" stroke="#f8f8f8" stroke-width="1.6"/>
<polyline points="1150.0,630.0 1150.0,897.0" fill="none" stroke="#f8f8f8" stroke-width="1.6"/>
<polyline points="1200.0,620.0 1200.0,720.0" fill="none" stroke="#f8f8f8" stroke-width="1.6"/>
<polyline points="1093.0,130.0 1917.0,130.0" fill="none" stroke="#f8f8f8" stroke-width="1.6"/>
<polyline points="1093.0,166.0 1550.0,166.0" fill="none" stroke="#f8f8f8" stroke-width="1.6"/>
<polyline points="1093.0,232.0 1917.0,232.0" fill="none" stroke="#f8f8f8" stroke-width="1.6"/>
<polyline points="1093.0,300.0 1917.0,300.0" fill="none" stroke="#f8f8f8" stroke-width="1.6"/>
<polyline points="1093.0,330.0 1500.0,330.0" fill="none" stroke="#f8f8f8" stroke-width="1.6"/>
<polyline points="1440.0,270.0 1917.0,270.0" fill="none" stroke="#f8f8f8" stroke-width="1.6"/>
<polyline points="1093.0,423.0 1917.0,423.0" fill="none" stroke="#f8f8f8" stroke-width="1.6"/>
<polyline points="1093.0,467.0 1917.0,467.0" fill="none" stroke="#f8f8f8" stroke-width="1.6"/>
<polyline points="1093.0,580.0 1917.0,580.0" fill="none" stroke="#f8f8f8" stroke-width="1.6"/>
<polyline points="1093.0,535.0 1917.0,535.0" fill="none" stroke="#f8f8f8" stroke-width="1.6"/>
<polyline points="1093.0,620.0 1180.0,620.0" fill="none" stroke="#f8f8f8" stroke-width="1.6"/>
<polyline points="1440.0,660.0 1917.0,660.0" fill="none" stroke="#f8f8f8" stroke-width="1.6"/>
<polyline points="1093.0,690.0 1180.0,690.0" fill="none" stroke="#f8f8f8" stroke-width="1.6"/>
<polyline points="1093.0,725.0 1170.0,725.0" fill="none" stroke="#f8f8f8" stroke-width="1.6"/>
<polyline points="1480.0,830.0 1917.0,830.0" fill="none" stroke="#f8f8f8" stroke-width="1.6"/>
<polyline points="1520.0,725.0 1917.0,725.0" fill="none" stroke="#f8f8f8" stroke-width="1.6"/>
<polyline points="1093.0,830.0 1180.0,830.0" fill="none" stroke="#f8f8f8" stroke-width="1.6"/>
<polyline points="1592.7,267.6 1700.0,189.8" fill="none" stroke="#f8f8f8" stroke-width="1.6"/>
<polyline points="1380.0,154.3 1570.0,154.3 1576.7,148.6 1608.7,121.0 1620.0,116.6 1670.5,116.6" fill="none" stroke="#f8f8f8" stroke-width="1.6"/>
<polyline points="1643.0,231.0 1698.0,192.0 1759.0,189.0" fill="none" stroke="#f8f8f8" stroke-width="1.6"/>
<polyline points="1820.0,640.0 1917.0,700.0" fill="none" stroke="#f8f8f8" stroke-width="1.6"/>
<polyline points="1830.0,640.0 1917.0,760.0" fill="none" stroke="#f8f8f8" stroke-width="1.6"/>
<polygon points="1234.9,603.6 1216.1,614.9 1193.7,629.8 1175.0,646.7 1170.3,661.7 1171.8,680.0 1178.7,702.0 1187.0,735.0 1196.6,771.0 1184.2,798.8 1178.7,826.5 1184.2,848.6 1209.0,876.0 1231.0,897.0 1449.0,897.0 1459.0,879.0 1439.0,869.0 1440.0,857.0 1429.0,849.0 1427.0,804.0 1432.0,788.0 1427.0,749.0 1412.0,724.0 1398.0,712.0 1414.5,701.0 1414.5,695.3 1380.0,680.0 1401.4,626.0 1401.4,566.0 1405.0,543.7 1397.7,541.9 1373.4,551.2 1336.9,557.8 1310.0,575.0 1294.8,579.3 1279.8,588.7 1257.3,600.0" fill="#bfd0de"/>
<polygon points="1259.8,610.0 1279.7,600.0 1296.4,646.5 1303.0,666.5 1289.7,680.0 1259.8,680.0 1254.8,646.5" fill="#e8e8e7"/>
<polygon points="1306.0,571.8 1336.9,557.8 1336.9,596.1 1350.9,622.4 1352.8,678.5 1332.2,697.2 1309.7,652.3 1304.1,618.6" fill="#e8e8e7"/>
<polygon points="1380.8,639.2 1429.5,637.3 1429.5,695.3 1414.5,695.3 1362.1,678.5" fill="#e8e8e7"/>
<polygon points="1401.4,566.2 1440.0,560.0 1440.0,640.0 1401.4,626.1" fill="#e8e8e7"/>
<polygon points="1329.0,767.0 1364.0,765.0 1362.0,800.0 1352.0,829.0 1330.0,828.0" fill="#e8e8e7"/>
<polygon points="1338.0,701.0 1413.0,701.0 1413.0,710.0 1338.0,710.0" fill="#e8e8e7"/>
<polygon points="1784.0,142.5 1808.8,145.2 1818.5,156.3 1814.4,172.9 1808.8,186.7 1815.7,206.0 1811.6,219.8 1797.8,219.8 1778.4,213.0 1768.8,200.5 1768.8,178.4 1772.9,159.0" fill="#bfd0de"/>
<polygon points="1180.0,198.0 1195.0,186.0 1204.0,195.0 1198.0,215.0 1186.0,230.0 1160.0,232.0 1156.0,222.0 1170.0,212.0" fill="#bfd0de"/>
<polygon points="1183.0,108.0 1205.0,105.0 1222.0,112.0 1215.0,128.0 1195.0,132.0 1182.0,125.0" fill="#bfd0de"/>
<polygon points="1838.0,525.0 1858.0,521.0 1862.0,535.0 1855.0,550.0 1840.0,548.0" fill="#bfd0de"/>
<polygon points="1822.0,480.0 1832.0,478.0 1834.0,500.0 1822.0,503.0" fill="#bfd0de"/>
<polygon points="1706.0,475.0 1730.0,475.0 1728.0,490.0 1708.0,488.0" fill="#bfd0de"/>
<polygon points="1812.0,412.0 1826.0,410.0 1828.0,422.0 1814.0,424.0" fill="#bfd0de"/>
<polygon points="1823.0,442.0 1835.0,438.0 1845.0,450.0 1830.0,456.0" fill="#bfd0de"/>
<polygon points="1884.0,420.0 1896.0,416.0 1910.0,425.0 1905.0,440.0 1888.0,438.0" fill="#bfd0de"/>
<polygon points="1892.0,497.0 1904.0,497.0 1906.0,521.0 1893.0,520.0" fill="#bfd0de"/>
<polygon points="1671.0,555.0 1692.0,556.0 1690.0,566.0 1672.0,565.0" fill="#bfd0de"/>
<polygon points="1643.0,645.0 1662.0,648.0 1664.0,670.0 1645.0,672.0" fill="#bfd0de"/>
<polygon points="1682.0,680.0 1700.0,678.0 1726.0,690.0 1722.0,699.0 1690.0,698.0" fill="#bfd0de"/>
<polygon points="1530.0,735.0 1550.0,735.0 1550.0,760.0 1530.0,760.0" fill="#bfd0de"/>
<polygon points="1479.0,780.0 1505.0,778.0 1505.0,795.0 1481.0,795.0" fill="#bfd0de"/>
<polygon points="1440.0,800.0 1455.0,800.0 1455.0,820.0 1440.0,820.0" fill="#bfd0de"/>
<polygon points="1600.0,780.0 1618.0,780.0 1618.0,800.0 1600.0,800.0" fill="#bfd0de"/>
<polygon points="1620.0,712.0 1640.0,712.0 1640.0,725.0 1620.0,725.0" fill="#bfd0de"/>
<polygon points="1240.0,128.0 1258.0,128.0 1258.0,142.0 1240.0,142.0" fill="#bfd0de"/>
<polygon points="1225.0,160.0 1240.0,158.0 1240.0,172.0 1225.0,172.0" fill="#bfd0de"/>
<polygon points="1120.0,115.0 1135.0,115.0 1135.0,126.0 1120.0,126.0" fill="#bfd0de"/>
<polygon points="1143.0,135.0 1152.0,135.0 1152.0,150.0 1143.0,150.0" fill="#bfd0de"/>
<polygon points="1096.0,260.0 1110.0,256.0 1112.0,265.0 1100.0,268.0" fill="#bfd0de"/>
<polygon points="1174.0,290.0 1192.0,288.0 1190.0,300.0 1176.0,300.0" fill="#bfd0de"/>
<polygon points="1160.0,240.0 1180.0,238.0 1182.0,250.0 1160.0,252.0" fill="#bfd0de"/>
<polygon points="1656.0,490.0 1664.0,490.0 1664.0,510.0 1656.0,510.0" fill="#bfd0de"/>
<polyline points="1790.0,101.0 1795.0,115.0 1810.0,125.0 1822.0,120.0" fill="none" stroke="#bfd0de" stroke-width="2" stroke-linejoin="round"/>
<polyline points="1540.0,118.0 1560.0,126.0 1580.0,118.0 1600.0,112.0" fill="none" stroke="#bfd0de" stroke-width="2" stroke-linejoin="round"/>
<polyline points="1395.0,112.0 1403.0,130.0 1400.0,148.0" fill="none" stroke="#bfd0de" stroke-width="2" stroke-linejoin="round"/>
<polyline points="1480.0,150.0 1490.0,170.0 1505.0,180.0 1520.0,176.0 1535.0,190.0" fill="none" stroke="#bfd0de" stroke-width="2" stroke-linejoin="round"/>
<polyline points="1520.0,230.0 1510.0,260.0 1498.0,300.0" fill="none" stroke="#bfd0de" stroke-width="2" stroke-linejoin="round"/>
<polyline points="1717.0,759.0 1729.0,771.0 1748.0,788.0 1759.0,799.0 1776.0,815.0 1781.0,835.0" fill="none" stroke="#bfd0de" stroke-width="2" stroke-linejoin="round"/>
<polyline points="1717.0,759.0 1700.0,765.0 1690.0,777.0 1693.0,804.0 1684.0,821.0 1657.0,824.0" fill="none" stroke="#bfd0de" stroke-width="2" stroke-linejoin="round"/>
<polyline points="1484.0,850.0 1520.0,846.0 1560.0,854.0 1600.0,848.0 1643.0,852.0" fill="none" stroke="#bfd0de" stroke-width="2" stroke-linejoin="round"/>
<polyline points="1223.0,367.0 1226.0,381.0 1242.0,392.0 1245.0,400.0 1237.0,422.0 1215.0,447.0 1199.0,466.0 1209.0,483.0 1223.0,497.0 1242.0,516.0 1250.0,527.0" fill="none" stroke="#bfd0de" stroke-width="4" stroke-linejoin="round"/>
<polyline points="1250.0,527.0 1262.0,545.0" fill="none" stroke="#bfd0de" stroke-width="4" stroke-linejoin="round"/>
<polyline points="1231.6,420.0 1245.6,398.0 1222.0,376.0 1225.0,370.0 1248.8,351.0 1247.0,328.0 1255.0,312.0 1289.0,317.0 1305.0,320.0 1316.0,335.6 1328.4,312.0 1352.0,301.0" fill="none" stroke="#bfd0de" stroke-width="4" stroke-linejoin="round"/>
<polyline points="1445.0,560.0 1470.0,555.0 1500.0,550.0 1530.0,548.0" fill="none" stroke="#bfd0de" stroke-width="4" stroke-linejoin="round"/>
<polyline points="1484.0,850.0 1520.0,846.0 1560.0,854.0 1600.0,848.0 1643.0,852.0" fill="none" stroke="#bfd0de" stroke-width="4" stroke-linejoin="round"/>
<polyline points="1594.0,145.0 1597.0,295.0 1581.0,367.0 1581.0,436.0 1539.0,466.0 1528.0,486.0 1528.0,522.0 1520.0,545.0" fill="none" stroke="#bfd0de" stroke-width="4" stroke-linejoin="round"/>
<polyline points="1352.0,301.0 1367.5,290.0 1377.0,298.0 1383.0,317.0 1370.6,335.6 1372.0,346.6 1392.5,351.0 1395.6,338.7 1403.4,317.0 1423.8,306.0 1452.0,298.0 1458.0,301.0 1467.5,317.0 1475.0,332.5 1480.0,339.0" fill="none" stroke="#bfd0de" stroke-width="4" stroke-linejoin="round"/>
<polyline points="1643.0,471.0 1707.0,456.0 1743.0,460.0 1918.0,414.0" fill="none" stroke="#d9c3b5" stroke-width="0.9"/>
<polyline points="1643.0,547.0 1831.0,575.0 1918.0,541.0" fill="none" stroke="#d9c3b5" stroke-width="0.9"/>
<polyline points="1445.0,560.0 1560.0,575.0 1643.0,547.0" fill="none" stroke="#d9c3b5" stroke-width="0.9"/>
<polyline points="1283.0,101.0 1300.0,200.0 1325.0,290.0 1350.0,380.0" fill="none" stroke="#d9c3b5" stroke-width="0.9"/>
<polyline points="1275.0,101.0 1277.0,300.0 1281.0,497.0 1273.0,515.0 1221.0,521.5 1142.0,528.0 1093.0,545.0" fill="none" stroke="#c9cecd" stroke-width="3.2" stroke-linejoin="round"/>
<polyline points="1130.0,101.0 1130.0,500.0 1128.0,733.0" fill="none" stroke="#c9cecd" stroke-width="2.4" stroke-linejoin="round"/>
<polyline points="1263.0,101.0 1263.0,470.0" fill="none" stroke="#c9cecd" stroke-width="2.4" stroke-linejoin="round"/>
<polyline points="1286.0,101.0 1286.0,480.0" fill="none" stroke="#c9cecd" stroke-width="2.4" stroke-linejoin="round"/>
<polyline points="1263.0,202.0 1917.0,202.0" fill="none" stroke="#c9cecd" stroke-width="2.4" stroke-linejoin="round"/>
<polyline points="1183.0,274.6 1534.0,274.6" fill="none" stroke="#c9cecd" stroke-width="2.4" stroke-linejoin="round"/>
<polyline points="1093.0,394.0 1650.0,394.0" fill="none" stroke="#c9cecd" stroke-width="2.4" stroke-linejoin="round"/>
<polyline points="1093.0,444.0 1700.0,444.0" fill="none" stroke="#c9cecd" stroke-width="2.4" stroke-linejoin="round"/>
<polyline points="1572.0,101.0 1572.0,200.0 1586.0,251.0 1628.0,293.0 1649.0,354.0 1651.0,500.0 1649.0,560.0 1636.0,624.0 1605.0,676.0 1588.0,724.0 1590.0,897.0" fill="none" stroke="#c9cecd" stroke-width="3.2" stroke-linejoin="round"/>
<polyline points="1281.0,497.0 1368.0,496.0 1445.0,490.0 1539.0,396.0 1605.0,387.0 1698.0,359.0 1792.0,331.0 1917.0,298.0" fill="none" stroke="#c9cecd" stroke-width="3.2" stroke-linejoin="round"/>
<polyline points="1277.8,543.3 1352.0,545.5 1526.7,545.5 1570.0,571.7 1614.0,611.0 1657.7,622.0 1723.0,619.7" fill="none" stroke="#c9cecd" stroke-width="3.2" stroke-linejoin="round"/>
<polyline points="1216.6,567.0 1168.6,619.7 1129.3,698.3 1107.5,742.0" fill="none" stroke="#c9cecd" stroke-width="2.4" stroke-linejoin="round"/>
<polyline points="1431.6,600.0 1431.6,735.0 1489.6,897.0" fill="none" stroke="#c9cecd" stroke-width="2.4" stroke-linejoin="round"/>
<polyline points="1650.0,620.0 1917.0,560.0" fill="none" stroke="#c9cecd" stroke-width="2.4" stroke-linejoin="round"/>
<polyline points="1579.0,240.0 1608.7,212.7 1643.0,200.0 1712.0,156.0 1809.0,101.0" fill="none" stroke="#c9cecd" stroke-width="2.4" stroke-linejoin="round"/>
<polyline points="1650.0,588.0 1917.0,588.0" fill="none" stroke="#c9cecd" stroke-width="2.4" stroke-linejoin="round"/>
<g><text x="1188" y="143" font-size="11" fill="#8a8a8a" letter-spacing="0" stroke="#f2f2f2" stroke-width="2.5" paint-order="stroke" stroke-linejoin="round">Lake Magdalene</text>
<text x="1282" y="143" font-size="11" fill="#8a8a8a" letter-spacing="0" stroke="#f2f2f2" stroke-width="2.5" paint-order="stroke" stroke-linejoin="round">watney</text>
<text x="1093" y="162" font-size="11" fill="#8a8a8a" letter-spacing="0" stroke="#f2f2f2" stroke-width="2.5" paint-order="stroke" stroke-linejoin="round">d Villa</text>
<text x="1365" y="178" font-size="11" fill="#8a8a8a" letter-spacing="0" stroke="#f2f2f2" stroke-width="2.5" paint-order="stroke" stroke-linejoin="round">University of</text>
<text x="1362" y="193" font-size="11" fill="#8a8a8a" letter-spacing="0" stroke="#f2f2f2" stroke-width="2.5" paint-order="stroke" stroke-linejoin="round">South Florida</text>
<text x="1688" y="183" font-size="11" fill="#8a8a8a" letter-spacing="0" stroke="#f2f2f2" stroke-width="2.5" paint-order="stroke" stroke-linejoin="round">Thonotosassa</text>
<text x="1647" y="218" font-size="11" fill="#8a8a8a" letter-spacing="0" stroke="#f2f2f2" stroke-width="2.5" paint-order="stroke" stroke-linejoin="round">Clarkwild</text>
<text x="1097" y="247" font-size="10" fill="#8a8a8a" letter-spacing="2" stroke="#f2f2f2" stroke-width="2.5" paint-order="stroke" stroke-linejoin="round">MULLIS</text>
<text x="1103" y="261" font-size="10" fill="#8a8a8a" letter-spacing="2" stroke="#f2f2f2" stroke-width="2.5" paint-order="stroke" stroke-linejoin="round">CITY</text>
<text x="1162" y="268" font-size="11" fill="#8a8a8a" letter-spacing="0" stroke="#f2f2f2" stroke-width="2.5" paint-order="stroke" stroke-linejoin="round">Goldstein</text>
<text x="1415" y="271" font-size="14" fill="#7a7a7a" letter-spacing="0" stroke="#f2f2f2" stroke-width="2.5" paint-order="stroke" stroke-linejoin="round">Temple Terrace</text>
<text x="1537" y="276" font-size="11" fill="#8a8a8a" letter-spacing="0" stroke="#f2f2f2" stroke-width="2.5" paint-order="stroke" stroke-linejoin="round">Temple Terrace</text>
<text x="1555" y="290" font-size="11" fill="#8a8a8a" letter-spacing="0" stroke="#f2f2f2" stroke-width="2.5" paint-order="stroke" stroke-linejoin="round">Junction</text>
<text x="1260" y="296" font-size="10" fill="#8a8a8a" letter-spacing="2" stroke="#f2f2f2" stroke-width="2.5" paint-order="stroke" stroke-linejoin="round">SULPHUR</text>
<text x="1262" y="309" font-size="10" fill="#8a8a8a" letter-spacing="2" stroke="#f2f2f2" stroke-width="2.5" paint-order="stroke" stroke-linejoin="round">SPRINGS</text>
<text x="1119" y="330" font-size="11" fill="#8a8a8a" letter-spacing="0" stroke="#f2f2f2" stroke-width="2.5" paint-order="stroke" stroke-linejoin="round">Egypt Lake-Leto</text>
<text x="1093" y="348" font-size="11" fill="#8a8a8a" letter-spacing="0" stroke="#f2f2f2" stroke-width="2.5" paint-order="stroke" stroke-linejoin="round">eto</text>
<text x="1493" y="338" font-size="11" fill="#8a8a8a" letter-spacing="0" stroke="#f2f2f2" stroke-width="2.5" paint-order="stroke" stroke-linejoin="round">Harney</text>
<text x="1730" y="374" font-size="11" fill="#8a8a8a" letter-spacing="0" stroke="#f2f2f2" stroke-width="2.5" paint-order="stroke" stroke-linejoin="round">Jolly Corner</text>
<text x="1715" y="411" font-size="11" fill="#8a8a8a" letter-spacing="0" stroke="#f2f2f2" stroke-width="2.5" paint-order="stroke" stroke-linejoin="round">Mango Hills</text>
<text x="1112" y="440" font-size="11" fill="#8a8a8a" letter-spacing="0" stroke="#f2f2f2" stroke-width="2.5" paint-order="stroke" stroke-linejoin="round">Park</text>
<text x="1780" y="440" font-size="11" fill="#8a8a8a" letter-spacing="0" stroke="#f2f2f2" stroke-width="2.5" paint-order="stroke" stroke-linejoin="round">Sef</text>
<text x="1247" y="494" font-size="10" fill="#8a8a8a" letter-spacing="2" stroke="#f2f2f2" stroke-width="2.5" paint-order="stroke" stroke-linejoin="round">TAMPA</text>
<text x="1244" y="507" font-size="10" fill="#8a8a8a" letter-spacing="2" stroke="#f2f2f2" stroke-width="2.5" paint-order="stroke" stroke-linejoin="round">HEIGHTS</text>
<text x="1487" y="477" font-size="11" fill="#8a8a8a" letter-spacing="0" stroke="#f2f2f2" stroke-width="2.5" paint-order="stroke" stroke-linejoin="round">Orient Park</text>
<text x="1146" y="540" font-size="11" fill="#8a8a8a" letter-spacing="0" stroke="#f2f2f2" stroke-width="2.5" paint-order="stroke" stroke-linejoin="round">West Tampa</text>
<text x="1236" y="561" font-size="17" fill="#5a5a5a" letter-spacing="0" stroke="#f2f2f2" stroke-width="2.5" paint-order="stroke" stroke-linejoin="round">Tampa</text>
<text x="1449" y="572" font-size="11" fill="#8a8a8a" letter-spacing="0" stroke="#f2f2f2" stroke-width="2.5" paint-order="stroke" stroke-linejoin="round">Palm River</text>
<text x="1698" y="566" font-size="11" fill="#8a8a8a" letter-spacing="0" stroke="#f2f2f2" stroke-width="2.5" paint-order="stroke" stroke-linejoin="round">Limona</text>
<text x="1832" y="565" font-size="11" fill="#8a8a8a" letter-spacing="0" stroke="#f2f2f2" stroke-width="2.5" paint-order="stroke" stroke-linejoin="round">Valrico</text>
<text x="1207" y="603" font-size="10" fill="#8a8a8a" letter-spacing="2" stroke="#f2f2f2" stroke-width="2.5" paint-order="stroke" stroke-linejoin="round">HYDE PARK</text>
<text x="1737" y="594" font-size="17" fill="#5a5a5a" letter-spacing="0" stroke="#f2f2f2" stroke-width="2.5" paint-order="stroke" stroke-linejoin="round">Brandon</text>
<text x="1305" y="594" font-size="11" fill="#8a8a8a" letter-spacing="0" stroke="#f2f2f2" stroke-width="2.5" paint-order="stroke" stroke-linejoin="round">Palmetto Beach</text>
<text x="1505" y="608" font-size="10" fill="#8a8a8a" letter-spacing="2" stroke="#f2f2f2" stroke-width="2.5" paint-order="stroke" stroke-linejoin="round">CLAIR-</text>
<text x="1500" y="621" font-size="10" fill="#8a8a8a" letter-spacing="2" stroke="#f2f2f2" stroke-width="2.5" paint-order="stroke" stroke-linejoin="round">MEL CITY</text>
<text x="1121" y="647" font-size="10" fill="#8a8a8a" letter-spacing="2" stroke="#f2f2f2" stroke-width="2.5" paint-order="stroke" stroke-linejoin="round">PALMA CEIA</text>
<text x="1350" y="694" font-size="11" fill="#8a8a8a" letter-spacing="0" stroke="#f2f2f2" stroke-width="2.5" paint-order="stroke" stroke-linejoin="round">Port Sutton</text>
<text x="1499" y="716" font-size="11" fill="#8a8a8a" letter-spacing="0" stroke="#f2f2f2" stroke-width="2.5" paint-order="stroke" stroke-linejoin="round">Progress Village</text>
<text x="1878" y="737" font-size="11" fill="#8a8a8a" letter-spacing="0" stroke="#f2f2f2" stroke-width="2.5" paint-order="stroke" stroke-linejoin="round">Bloomingdale</text>
<text x="1617" y="811" font-size="14" fill="#7a7a7a" letter-spacing="0" stroke="#f2f2f2" stroke-width="2.5" paint-order="stroke" stroke-linejoin="round">Riverview</text>
<text x="1463" y="869" font-size="11" fill="#8a8a8a" letter-spacing="0" stroke="#f2f2f2" stroke-width="2.5" paint-order="stroke" stroke-linejoin="round">Gibsonton</text>
<text x="1111" y="895" font-size="11" fill="#8a8a8a" letter-spacing="0" stroke="#f2f2f2" stroke-width="2.5" paint-order="stroke" stroke-linejoin="round">MacDill Air</text>
<text x="1093" y="751" font-size="11" fill="#8a8a8a" letter-spacing="0" stroke="#f2f2f2" stroke-width="2.5" paint-order="stroke" stroke-linejoin="round">ke</text>
<text x="1880" y="885" font-size="13" fill="#bdbdbd" letter-spacing="0" stroke="#f2f2f2" stroke-width="2.5" paint-order="stroke" stroke-linejoin="round">Fish</text></g>
<g><g transform="translate(1127,135.5)"><circle r="10.3" fill="url(#mg)" stroke="#22423f" stroke-width="1.7"/><path d="M-3.5 -4.5 H3.5 M-3 -4 L3 1.5 M3 -4 L-3 1.5 M-3 4 L3 -1.5 M3 4 L-3 -1.5" stroke="#111" stroke-width="1.3" fill="none"/><path d="M-4.5 4.6 H4.5" stroke="#111" stroke-width="1.6"/></g>
<g transform="translate(1127.5,157)"><circle r="10.3" fill="url(#mg)" stroke="#22423f" stroke-width="1.5"/></g>
<g transform="translate(1280,133.7)"><circle r="10.3" fill="url(#mg)" stroke="#22423f" stroke-width="1.5"/></g>
<g transform="translate(1288,166)"><circle r="10.3" fill="url(#mg)" stroke="#22423f" stroke-width="1.7"/><path d="M-3.5 -4.5 H3.5 M-3 -4 L3 1.5 M3 -4 L-3 1.5 M-3 4 L3 -1.5 M3 4 L-3 -1.5" stroke="#111" stroke-width="1.3" fill="none"/><path d="M-4.5 4.6 H4.5" stroke="#111" stroke-width="1.6"/></g>
<g transform="translate(1333.5,195)"><circle r="10.3" fill="url(#mg)" stroke="#22423f" stroke-width="1.5"/></g>
<g transform="translate(1238.7,238.6)"><circle r="10.3" fill="url(#mg)" stroke="#22423f" stroke-width="1.7"/><path d="M-3.6 -4.2 Q-5.2 -3.2 -4.2 -0.5 Q-2.2 3.6 2.2 4.6 Q4.2 4.8 4.6 3.2 L2.6 1.6 L1.4 2.5 Q-0.8 1.5 -1.9 -0.9 L-1 -2.1Z" fill="#123"/></g>
<g transform="translate(1323.8,239.7)"><circle r="10.3" fill="url(#mg)" stroke="#22423f" stroke-width="1.7"/><path d="M-3.6 -4.2 Q-5.2 -3.2 -4.2 -0.5 Q-2.2 3.6 2.2 4.6 Q4.2 4.8 4.6 3.2 L2.6 1.6 L1.4 2.5 Q-0.8 1.5 -1.9 -0.9 L-1 -2.1Z" fill="#123"/></g>
<g transform="translate(1338.4,229.5)"><circle r="10.3" fill="url(#mg)" stroke="#22423f" stroke-width="1.5"/><path d="M-4.8 -3.8 H4.8 V2.8 H3.6 V4.6 L1.8 2.8 H-4.8Z" fill="none" stroke="#123" stroke-width="1.3"/><path d="M-2.8 -1.5 H2.6 M-2.8 0.6 H1" stroke="#123" stroke-width="1"/></g>
<g transform="translate(1138.6,284.8)"><circle r="10.3" fill="url(#mg)" stroke="#22423f" stroke-width="1.7"/><path d="M-3.6 -4.2 Q-5.2 -3.2 -4.2 -0.5 Q-2.2 3.6 2.2 4.6 Q4.2 4.8 4.6 3.2 L2.6 1.6 L1.4 2.5 Q-0.8 1.5 -1.9 -0.9 L-1 -2.1Z" fill="#123"/></g>
<g transform="translate(1147.7,277.3)"><circle r="10.3" fill="url(#mg)" stroke="#22423f" stroke-width="1.5"/></g>
<g transform="translate(1357.8,314.6)"><circle r="10.3" fill="url(#mg)" stroke="#22423f" stroke-width="1.5"/></g>
<g transform="translate(1262.2,349.2)"><circle r="10.3" fill="url(#mg)" stroke="#22423f" stroke-width="1.5"/></g>
<g transform="translate(1151.6,354.7)"><circle r="10.3" fill="url(#mg)" stroke="#22423f" stroke-width="1.5"/><path d="M-4.8 -3.8 H4.8 V2.8 H3.6 V4.6 L1.8 2.8 H-4.8Z" fill="none" stroke="#123" stroke-width="1.3"/><path d="M-2.8 -1.5 H2.6 M-2.8 0.6 H1" stroke="#123" stroke-width="1"/></g>
<g transform="translate(1398.4,183.9)"><circle r="10.3" fill="url(#mg)" stroke="#22423f" stroke-width="1.5"/></g>
<g transform="translate(1383.2,213)"><circle r="10.3" fill="url(#mg)" stroke="#22423f" stroke-width="1.7"/><path d="M-3.6 -4.2 Q-5.2 -3.2 -4.2 -0.5 Q-2.2 3.6 2.2 4.6 Q4.2 4.8 4.6 3.2 L2.6 1.6 L1.4 2.5 Q-0.8 1.5 -1.9 -0.9 L-1 -2.1Z" fill="#123"/></g>
<g transform="translate(1533,174.8)"><circle r="10.3" fill="url(#mg)" stroke="#22423f" stroke-width="1.5"/></g>
<g transform="translate(1406.7,297.8)"><circle r="10.3" fill="url(#mg)" stroke="#22423f" stroke-width="1.5"/><path d="M-4.8 -3.8 H4.8 V2.8 H3.6 V4.6 L1.8 2.8 H-4.8Z" fill="none" stroke="#123" stroke-width="1.3"/><path d="M-2.8 -1.5 H2.6 M-2.8 0.6 H1" stroke="#123" stroke-width="1"/></g>
<g transform="translate(1637.5,295.9)"><circle r="10.3" fill="url(#mg)" stroke="#22423f" stroke-width="1.5"/><path d="M-4.8 -3.8 H4.8 V2.8 H3.6 V4.6 L1.8 2.8 H-4.8Z" fill="none" stroke="#123" stroke-width="1.3"/><path d="M-2.8 -1.5 H2.6 M-2.8 0.6 H1" stroke="#123" stroke-width="1"/></g>
<g transform="translate(1554.6,345.6)"><circle r="10.3" fill="url(#mg)" stroke="#22423f" stroke-width="1.7"/><path d="M-3.6 -4.2 Q-5.2 -3.2 -4.2 -0.5 Q-2.2 3.6 2.2 4.6 Q4.2 4.8 4.6 3.2 L2.6 1.6 L1.4 2.5 Q-0.8 1.5 -1.9 -0.9 L-1 -2.1Z" fill="#123"/></g>
<g transform="translate(1431.6,355.3)"><circle r="10.3" fill="url(#mg)" stroke="#22423f" stroke-width="1.5"/></g>
<g transform="translate(1446.8,356.7)"><circle r="10.3" fill="url(#mgl)" stroke="#22423f" stroke-width="1.5"/><path d="M-3.5 -4.5 H3.5 M-3 -4 L3 1.5 M3 -4 L-3 1.5 M-3 4 L3 -1.5 M3 4 L-3 -1.5" stroke="#111" stroke-width="1.3" fill="none"/><path d="M-4.5 4.6 H4.5" stroke="#111" stroke-width="1.6"/></g>
<g transform="translate(1492.9,353)"><circle r="10.3" fill="url(#mg)" stroke="#22423f" stroke-width="1.5"/></g>
<g transform="translate(1507.6,364)"><circle r="10.3" fill="url(#mg)" stroke="#22423f" stroke-width="1.7"/><path d="M-3.6 -4.2 Q-5.2 -3.2 -4.2 -0.5 Q-2.2 3.6 2.2 4.6 Q4.2 4.8 4.6 3.2 L2.6 1.6 L1.4 2.5 Q-0.8 1.5 -1.9 -0.9 L-1 -2.1Z" fill="#123"/></g>
<g transform="translate(1722.6,232.8)"><circle r="10.3" fill="url(#mg)" stroke="#22423f" stroke-width="1.5"/></g>
<g transform="translate(1909.7,314.4)"><circle r="10.3" fill="url(#mg)" stroke="#22423f" stroke-width="1.5"/></g>
<g transform="translate(1706,355.3)"><circle r="10.3" fill="url(#mg)" stroke="#22423f" stroke-width="1.5"/></g>
<g transform="translate(1792.3,358.6)"><circle r="10.3" fill="url(#mg)" stroke="#22423f" stroke-width="1.5"/><path d="M-4.8 -3.8 H4.8 V2.8 H3.6 V4.6 L1.8 2.8 H-4.8Z" fill="none" stroke="#123" stroke-width="1.3"/><path d="M-2.8 -1.5 H2.6 M-2.8 0.6 H1" stroke="#123" stroke-width="1"/></g>
<g transform="translate(1131.1,373.9)"><circle r="10.3" fill="url(#mg)" stroke="#22423f" stroke-width="1.7"/><path d="M-3.5 -4.5 H3.5 M-3 -4 L3 1.5 M3 -4 L-3 1.5 M-3 4 L3 -1.5 M3 4 L-3 -1.5" stroke="#111" stroke-width="1.3" fill="none"/><path d="M-4.5 4.6 H4.5" stroke="#111" stroke-width="1.6"/></g>
<g transform="translate(1191.1,369.8)"><circle r="10.3" fill="url(#mg)" stroke="#22423f" stroke-width="1.5"/><path d="M-4.8 -3.8 H4.8 V2.8 H3.6 V4.6 L1.8 2.8 H-4.8Z" fill="none" stroke="#123" stroke-width="1.3"/><path d="M-2.8 -1.5 H2.6 M-2.8 0.6 H1" stroke="#123" stroke-width="1"/></g>
<g transform="translate(1094.4,387.7)"><circle r="10.3" fill="url(#mg)" stroke="#22423f" stroke-width="1.5"/><path d="M-4.8 -3.8 H4.8 V2.8 H3.6 V4.6 L1.8 2.8 H-4.8Z" fill="none" stroke="#123" stroke-width="1.3"/><path d="M-2.8 -1.5 H2.6 M-2.8 0.6 H1" stroke="#123" stroke-width="1"/></g>
<g transform="translate(1265.7,380)"><circle r="10.3" fill="url(#mg)" stroke="#22423f" stroke-width="1.7"/><path d="M-3.6 -4.2 Q-5.2 -3.2 -4.2 -0.5 Q-2.2 3.6 2.2 4.6 Q4.2 4.8 4.6 3.2 L2.6 1.6 L1.4 2.5 Q-0.8 1.5 -1.9 -0.9 L-1 -2.1Z" fill="#123"/></g>
<g transform="translate(1205,402.9)"><circle r="10.3" fill="url(#mg)" stroke="#22423f" stroke-width="1.5"/><path d="M-4.8 -3.8 H4.8 V2.8 H3.6 V4.6 L1.8 2.8 H-4.8Z" fill="none" stroke="#123" stroke-width="1.3"/><path d="M-2.8 -1.5 H2.6 M-2.8 0.6 H1" stroke="#123" stroke-width="1"/></g>
<g transform="translate(1104,414)"><circle r="10.3" fill="url(#mg)" stroke="#22423f" stroke-width="1.7"/><path d="M-3.6 -4.2 Q-5.2 -3.2 -4.2 -0.5 Q-2.2 3.6 2.2 4.6 Q4.2 4.8 4.6 3.2 L2.6 1.6 L1.4 2.5 Q-0.8 1.5 -1.9 -0.9 L-1 -2.1Z" fill="#123"/></g>
<g transform="translate(1274.9,421.7)"><circle r="10.3" fill="url(#mg)" stroke="#22423f" stroke-width="1.5"/><path d="M-4.8 -3.8 H4.8 V2.8 H3.6 V4.6 L1.8 2.8 H-4.8Z" fill="none" stroke="#123" stroke-width="1.3"/><path d="M-2.8 -1.5 H2.6 M-2.8 0.6 H1" stroke="#123" stroke-width="1"/></g>
<g transform="translate(1315,422.8)"><circle r="10.3" fill="url(#mg)" stroke="#22423f" stroke-width="1.5"/></g>
<g transform="translate(1096,439.4)"><circle r="10.3" fill="url(#mg)" stroke="#22423f" stroke-width="1.7"/><path d="M-3.6 -4.2 Q-5.2 -3.2 -4.2 -0.5 Q-2.2 3.6 2.2 4.6 Q4.2 4.8 4.6 3.2 L2.6 1.6 L1.4 2.5 Q-0.8 1.5 -1.9 -0.9 L-1 -2.1Z" fill="#123"/></g>
<g transform="translate(1162.1,448.5)"><circle r="10.3" fill="url(#mg)" stroke="#22423f" stroke-width="1.7"/><path d="M-3.6 -4.2 Q-5.2 -3.2 -4.2 -0.5 Q-2.2 3.6 2.2 4.6 Q4.2 4.8 4.6 3.2 L2.6 1.6 L1.4 2.5 Q-0.8 1.5 -1.9 -0.9 L-1 -2.1Z" fill="#123"/></g>
<g transform="translate(1319.1,462.4)"><circle r="10.3" fill="url(#mg)" stroke="#22423f" stroke-width="1.5"/></g>
<g transform="translate(1200.8,509.3)"><circle r="10.3" fill="url(#mg)" stroke="#22423f" stroke-width="1.7"/><path d="M-3.6 -4.2 Q-5.2 -3.2 -4.2 -0.5 Q-2.2 3.6 2.2 4.6 Q4.2 4.8 4.6 3.2 L2.6 1.6 L1.4 2.5 Q-0.8 1.5 -1.9 -0.9 L-1 -2.1Z" fill="#123"/></g>
<g transform="translate(1122,518.5)"><circle r="10.3" fill="url(#mg)" stroke="#22423f" stroke-width="1.5"/></g>
<g transform="translate(1365,513.5)"><circle r="10.3" fill="url(#mg)" stroke="#22423f" stroke-width="1.5"/></g>
<g transform="translate(1358.3,525.1)"><circle r="10.3" fill="url(#mg)" stroke="#22423f" stroke-width="1.5"/></g>
<g transform="translate(1340.4,517.6)"><circle r="10.3" fill="url(#mg)" stroke="#22423f" stroke-width="1.5"/></g>
<g transform="translate(1326.6,523.7)"><circle r="10.3" fill="url(#mg)" stroke="#22423f" stroke-width="1.5"/></g>
<g transform="translate(1290.6,542.5)"><circle r="10.3" fill="url(#mg)" stroke="#22423f" stroke-width="1.5"/></g>
<g transform="translate(1303.6,548.9)"><circle r="10.3" fill="url(#mg)" stroke="#22423f" stroke-width="1.5"/></g>
<g transform="translate(1234.5,560.5)"><circle r="10.3" fill="url(#mg)" stroke="#22423f" stroke-width="1.5"/></g>
<g transform="translate(1321,564)"><circle r="10.3" fill="url(#mg)" stroke="#22423f" stroke-width="1.5"/></g>
<g transform="translate(1274,578.4)"><circle r="10.3" fill="url(#mg)" stroke="#22423f" stroke-width="1.5"/></g>
<g transform="translate(1269.9,557.7)"><circle r="10.3" fill="url(#mg)" stroke="#22423f" stroke-width="1.5"/></g>
<g transform="translate(1285.6,571)"><circle r="10.3" fill="url(#mg)" stroke="#22423f" stroke-width="1.7"/><path d="M-3.6 -4.2 Q-5.2 -3.2 -4.2 -0.5 Q-2.2 3.6 2.2 4.6 Q4.2 4.8 4.6 3.2 L2.6 1.6 L1.4 2.5 Q-0.8 1.5 -1.9 -0.9 L-1 -2.1Z" fill="#123"/></g>
<g transform="translate(1264.4,588.1)"><circle r="10.3" fill="url(#mg)" stroke="#22423f" stroke-width="1.5"/></g>
<g transform="translate(1193,589.5)"><circle r="10.3" fill="url(#mg)" stroke="#22423f" stroke-width="1.5"/></g>
<g transform="translate(1224.8,597)"><circle r="10.3" fill="url(#mg)" stroke="#22423f" stroke-width="1.7"/><path d="M-3.6 -4.2 Q-5.2 -3.2 -4.2 -0.5 Q-2.2 3.6 2.2 4.6 Q4.2 4.8 4.6 3.2 L2.6 1.6 L1.4 2.5 Q-0.8 1.5 -1.9 -0.9 L-1 -2.1Z" fill="#123"/></g>
<g transform="translate(1459.2,382.2)"><circle r="10.3" fill="url(#mg)" stroke="#22423f" stroke-width="1.5"/></g>
<g transform="translate(1466.1,391.3)"><circle r="10.3" fill="url(#mg)" stroke="#22423f" stroke-width="1.5"/></g>
<g transform="translate(1485.5,379.4)"><circle r="10.3" fill="url(#mg)" stroke="#22423f" stroke-width="1.5"/></g>
<g transform="translate(1511.2,382.2)"><circle r="10.3" fill="url(#mg)" stroke="#22423f" stroke-width="1.5"/></g>
<g transform="translate(1509,369.8)"><circle r="10.3" fill="url(#mg)" stroke="#22423f" stroke-width="1.7"/><path d="M-3.6 -4.2 Q-5.2 -3.2 -4.2 -0.5 Q-2.2 3.6 2.2 4.6 Q4.2 4.8 4.6 3.2 L2.6 1.6 L1.4 2.5 Q-0.8 1.5 -1.9 -0.9 L-1 -2.1Z" fill="#123"/></g>
<g transform="translate(1514.5,400.7)"><circle r="10.3" fill="url(#mgl)" stroke="#22423f" stroke-width="1.5"/><path d="M-3.5 -4.5 H3.5 M-3 -4 L3 1.5 M3 -4 L-3 1.5 M-3 4 L3 -1.5 M3 4 L-3 -1.5" stroke="#111" stroke-width="1.3" fill="none"/><path d="M-4.5 4.6 H4.5" stroke="#111" stroke-width="1.6"/></g>
<g transform="translate(1555.1,379.4)"><circle r="10.3" fill="url(#mg)" stroke="#22423f" stroke-width="1.5"/></g>
<g transform="translate(1640,384.1)"><circle r="10.3" fill="url(#mg)" stroke="#22423f" stroke-width="1.5"/></g>
<g transform="translate(1450.1,433.3)"><circle r="10.3" fill="url(#mg)" stroke="#22423f" stroke-width="1.5"/></g>
<g transform="translate(1602.9,441.6)"><circle r="10.3" fill="url(#mg)" stroke="#22423f" stroke-width="1.7"/><path d="M-3.5 -4.5 H3.5 M-3 -4 L3 1.5 M3 -4 L-3 1.5 M-3 4 L3 -1.5 M3 4 L-3 -1.5" stroke="#111" stroke-width="1.3" fill="none"/><path d="M-4.5 4.6 H4.5" stroke="#111" stroke-width="1.6"/></g>
<g transform="translate(1375.7,480.3)"><circle r="10.3" fill="url(#mg)" stroke="#22423f" stroke-width="1.5"/></g>
<g transform="translate(1393.7,474.2)"><circle r="10.3" fill="url(#mg)" stroke="#22423f" stroke-width="1.5"/></g>
<g transform="translate(1572.5,474)"><circle r="10.3" fill="url(#mg)" stroke="#22423f" stroke-width="1.5"/></g>
<g transform="translate(1562.9,471.5)"><circle r="10.3" fill="url(#mg)" stroke="#22423f" stroke-width="1.5"/></g>
<g transform="translate(1556.5,493.6)"><circle r="10.3" fill="url(#mg)" stroke="#22423f" stroke-width="1.5"/></g>
<g transform="translate(1579.6,501.6)"><circle r="10.3" fill="url(#mg)" stroke="#22423f" stroke-width="1.7"/><path d="M-3.6 -4.2 Q-5.2 -3.2 -4.2 -0.5 Q-2.2 3.6 2.2 4.6 Q4.2 4.8 4.6 3.2 L2.6 1.6 L1.4 2.5 Q-0.8 1.5 -1.9 -0.9 L-1 -2.1Z" fill="#123"/></g>
<g transform="translate(1493.8,481.7)"><circle r="10.3" fill="url(#mg)" stroke="#22423f" stroke-width="1.5"/></g>
<g transform="translate(1504,513.7)"><circle r="10.3" fill="url(#mg)" stroke="#22423f" stroke-width="1.5"/></g>
<g transform="translate(1518.5,513)"><circle r="10.3" fill="url(#mg)" stroke="#22423f" stroke-width="1.5"/></g>
<g transform="translate(1426.8,511.9)"><circle r="10.3" fill="url(#mg)" stroke="#22423f" stroke-width="1.7"/><path d="M-3.6 -4.2 Q-5.2 -3.2 -4.2 -0.5 Q-2.2 3.6 2.2 4.6 Q4.2 4.8 4.6 3.2 L2.6 1.6 L1.4 2.5 Q-0.8 1.5 -1.9 -0.9 L-1 -2.1Z" fill="#123"/></g>
<g transform="translate(1370.8,516.3)"><circle r="10.3" fill="url(#mg)" stroke="#22423f" stroke-width="1.5"/></g>
<g transform="translate(1643,520.4)"><circle r="10.3" fill="url(#mg)" stroke="#22423f" stroke-width="1.7"/><path d="M-3.5 -4.5 H3.5 M-3 -4 L3 1.5 M3 -4 L-3 1.5 M-3 4 L3 -1.5 M3 4 L-3 -1.5" stroke="#111" stroke-width="1.3" fill="none"/><path d="M-4.5 4.6 H4.5" stroke="#111" stroke-width="1.6"/></g>
<g transform="translate(1406.2,539.9)"><circle r="10.3" fill="url(#mg)" stroke="#22423f" stroke-width="1.5"/></g>
<g transform="translate(1400.6,531.8)"><circle r="10.3" fill="url(#mg)" stroke="#22423f" stroke-width="1.5"/></g>
<g transform="translate(1410,524.3)"><circle r="10.3" fill="url(#mg)" stroke="#22423f" stroke-width="1.5"/></g>
<g transform="translate(1421.1,538)"><circle r="10.3" fill="url(#mg)" stroke="#22423f" stroke-width="1.5"/></g>
<g transform="translate(1419.9,521.8)"><circle r="10.3" fill="url(#mg)" stroke="#22423f" stroke-width="1.7"/><path d="M-3.6 -4.2 Q-5.2 -3.2 -4.2 -0.5 Q-2.2 3.6 2.2 4.6 Q4.2 4.8 4.6 3.2 L2.6 1.6 L1.4 2.5 Q-0.8 1.5 -1.9 -0.9 L-1 -2.1Z" fill="#123"/></g>
<g transform="translate(1461.9,543.7)"><circle r="10.3" fill="url(#mg)" stroke="#22423f" stroke-width="1.5"/></g>
<g transform="translate(1497.9,539.9)"><circle r="10.3" fill="url(#mg)" stroke="#22423f" stroke-width="1.5"/></g>
<g transform="translate(1571,533.7)"><circle r="10.3" fill="url(#mg)" stroke="#22423f" stroke-width="1.7"/><path d="M-3.6 -4.2 Q-5.2 -3.2 -4.2 -0.5 Q-2.2 3.6 2.2 4.6 Q4.2 4.8 4.6 3.2 L2.6 1.6 L1.4 2.5 Q-0.8 1.5 -1.9 -0.9 L-1 -2.1Z" fill="#123"/></g>
<g transform="translate(1527.2,537.4)"><circle r="10.3" fill="url(#mg)" stroke="#22423f" stroke-width="1.5"/></g>
<g transform="translate(1534.6,539.9)"><circle r="10.3" fill="url(#mg)" stroke="#22423f" stroke-width="1.5"/></g>
<g transform="translate(1524.7,548)"><circle r="10.3" fill="url(#mg)" stroke="#22423f" stroke-width="1.5"/></g>
<g transform="translate(1545.9,542.4)"><circle r="10.3" fill="url(#mg)" stroke="#22423f" stroke-width="1.5"/></g>
<g transform="translate(1554.6,553.6)"><circle r="10.3" fill="url(#mg)" stroke="#22423f" stroke-width="1.5"/></g>
<g transform="translate(1555.9,569.9)"><circle r="10.3" fill="url(#mg)" stroke="#22423f" stroke-width="1.5"/></g>
<g transform="translate(1559,565.5)"><circle r="10.3" fill="url(#mg)" stroke="#22423f" stroke-width="1.7"/><path d="M-3.6 -4.2 Q-5.2 -3.2 -4.2 -0.5 Q-2.2 3.6 2.2 4.6 Q4.2 4.8 4.6 3.2 L2.6 1.6 L1.4 2.5 Q-0.8 1.5 -1.9 -0.9 L-1 -2.1Z" fill="#123"/></g>
<g transform="translate(1571,583)"><circle r="10.3" fill="url(#mg)" stroke="#22423f" stroke-width="1.5"/></g>
<g transform="translate(1585.2,560.7)"><circle r="10.3" fill="url(#mg)" stroke="#22423f" stroke-width="1.5"/></g>
<g transform="translate(1631.1,550.8)"><circle r="10.3" fill="url(#mg)" stroke="#22423f" stroke-width="1.5"/></g>
<g transform="translate(1448.8,579.8)"><circle r="10.3" fill="url(#mg)" stroke="#22423f" stroke-width="1.7"/><path d="M-3.6 -4.2 Q-5.2 -3.2 -4.2 -0.5 Q-2.2 3.6 2.2 4.6 Q4.2 4.8 4.6 3.2 L2.6 1.6 L1.4 2.5 Q-0.8 1.5 -1.9 -0.9 L-1 -2.1Z" fill="#123"/></g>
<g transform="translate(1501,591.7)"><circle r="10.3" fill="url(#mg)" stroke="#22423f" stroke-width="1.5"/></g>
<g transform="translate(1609,622.7)"><circle r="10.3" fill="url(#mg)" stroke="#22423f" stroke-width="1.5"/></g>
<g transform="translate(1753.6,378)"><circle r="10.3" fill="url(#mg)" stroke="#22423f" stroke-width="1.5"/></g>
<g transform="translate(1911,403)"><circle r="10.3" fill="url(#mg)" stroke="#22423f" stroke-width="1.7"/><path d="M-3.6 -4.2 Q-5.2 -3.2 -4.2 -0.5 Q-2.2 3.6 2.2 4.6 Q4.2 4.8 4.6 3.2 L2.6 1.6 L1.4 2.5 Q-0.8 1.5 -1.9 -0.9 L-1 -2.1Z" fill="#123"/></g>
<g transform="translate(1806.9,438.9)"><circle r="10.3" fill="url(#mg)" stroke="#22423f" stroke-width="1.5"/><path d="M-4.8 -3.8 H4.8 V2.8 H3.6 V4.6 L1.8 2.8 H-4.8Z" fill="none" stroke="#123" stroke-width="1.3"/><path d="M-2.8 -1.5 H2.6 M-2.8 0.6 H1" stroke="#123" stroke-width="1"/></g>
<g transform="translate(1789,516.8)"><circle r="10.3" fill="url(#mg)" stroke="#22423f" stroke-width="1.7"/><path d="M-3.6 -4.2 Q-5.2 -3.2 -4.2 -0.5 Q-2.2 3.6 2.2 4.6 Q4.2 4.8 4.6 3.2 L2.6 1.6 L1.4 2.5 Q-0.8 1.5 -1.9 -0.9 L-1 -2.1Z" fill="#123"/></g>
<g transform="translate(1782.6,539.7)"><circle r="10.3" fill="url(#mg)" stroke="#22423f" stroke-width="1.5"/><path d="M-4.8 -3.8 H4.8 V2.8 H3.6 V4.6 L1.8 2.8 H-4.8Z" fill="none" stroke="#123" stroke-width="1.3"/><path d="M-2.8 -1.5 H2.6 M-2.8 0.6 H1" stroke="#123" stroke-width="1"/></g>
<g transform="translate(1655.4,587.6)"><circle r="10.3" fill="url(#mg)" stroke="#22423f" stroke-width="1.5"/></g>
<g transform="translate(1737,596.4)"><circle r="10.3" fill="url(#mg)" stroke="#22423f" stroke-width="1.5"/></g>
<g transform="translate(1837.9,581.2)"><circle r="10.3" fill="url(#mg)" stroke="#22423f" stroke-width="1.5"/></g>
<g transform="translate(1837.9,588.1)"><circle r="10.3" fill="url(#mg)" stroke="#22423f" stroke-width="1.5"/></g>
<g transform="translate(1131.7,698.8)"><circle r="10.3" fill="url(#mg)" stroke="#22423f" stroke-width="1.5"/><path d="M-4.8 -3.8 H4.8 V2.8 H3.6 V4.6 L1.8 2.8 H-4.8Z" fill="none" stroke="#123" stroke-width="1.3"/><path d="M-2.8 -1.5 H2.6 M-2.8 0.6 H1" stroke="#123" stroke-width="1"/></g>
<g transform="translate(1137.8,742.7)"><circle r="10.3" fill="url(#mg)" stroke="#22423f" stroke-width="1.7"/><path d="M-3.5 -4.5 H3.5 M-3 -4 L3 1.5 M3 -4 L-3 1.5 M-3 4 L3 -1.5 M3 4 L-3 -1.5" stroke="#111" stroke-width="1.3" fill="none"/><path d="M-4.5 4.6 H4.5" stroke="#111" stroke-width="1.6"/></g>
<g transform="translate(1200,752.4)"><circle r="10.3" fill="url(#mg)" stroke="#22423f" stroke-width="1.7"/><path d="M-3.6 -4.2 Q-5.2 -3.2 -4.2 -0.5 Q-2.2 3.6 2.2 4.6 Q4.2 4.8 4.6 3.2 L2.6 1.6 L1.4 2.5 Q-0.8 1.5 -1.9 -0.9 L-1 -2.1Z" fill="#123"/></g>
<g transform="translate(1150.5,834.8)"><circle r="10.3" fill="url(#mg)" stroke="#22423f" stroke-width="1.7"/><path d="M-3.6 -4.2 Q-5.2 -3.2 -4.2 -0.5 Q-2.2 3.6 2.2 4.6 Q4.2 4.8 4.6 3.2 L2.6 1.6 L1.4 2.5 Q-0.8 1.5 -1.9 -0.9 L-1 -2.1Z" fill="#123"/></g>
<g transform="translate(1175.9,833.7)"><circle r="10.3" fill="url(#mg)" stroke="#22423f" stroke-width="1.5"/></g>
<g transform="translate(1448.7,641.3)"><circle r="10.3" fill="url(#mg)" stroke="#22423f" stroke-width="1.5"/></g>
<g transform="translate(1417.8,671.7)"><circle r="10.3" fill="url(#mg)" stroke="#22423f" stroke-width="1.5"/></g>
<g transform="translate(1433.8,683.3)"><circle r="10.3" fill="url(#mg)" stroke="#22423f" stroke-width="1.7"/><path d="M-3.6 -4.2 Q-5.2 -3.2 -4.2 -0.5 Q-2.2 3.6 2.2 4.6 Q4.2 4.8 4.6 3.2 L2.6 1.6 L1.4 2.5 Q-0.8 1.5 -1.9 -0.9 L-1 -2.1Z" fill="#123"/></g>
<g transform="translate(1456.4,695.2)"><circle r="10.3" fill="url(#mg)" stroke="#22423f" stroke-width="1.5"/></g>
<g transform="translate(1450.9,695.2)"><circle r="10.3" fill="url(#mg)" stroke="#22423f" stroke-width="1.5"/></g>
<g transform="translate(1482.7,688.8)"><circle r="10.3" fill="url(#mg)" stroke="#22423f" stroke-width="1.7"/><path d="M-3.6 -4.2 Q-5.2 -3.2 -4.2 -0.5 Q-2.2 3.6 2.2 4.6 Q4.2 4.8 4.6 3.2 L2.6 1.6 L1.4 2.5 Q-0.8 1.5 -1.9 -0.9 L-1 -2.1Z" fill="#123"/></g>
<g transform="translate(1473.6,707)"><circle r="10.3" fill="url(#mg)" stroke="#22423f" stroke-width="1.5"/></g>
<g transform="translate(1562.9,680)"><circle r="10.3" fill="url(#mg)" stroke="#22423f" stroke-width="1.5"/><path d="M-4.8 -3.8 H4.8 V2.8 H3.6 V4.6 L1.8 2.8 H-4.8Z" fill="none" stroke="#123" stroke-width="1.3"/><path d="M-2.8 -1.5 H2.6 M-2.8 0.6 H1" stroke="#123" stroke-width="1"/></g>
<g transform="translate(1605.7,732.5)"><circle r="10.3" fill="url(#mg)" stroke="#22423f" stroke-width="1.5"/></g>
<g transform="translate(1556,753.2)"><circle r="10.3" fill="url(#mg)" stroke="#22423f" stroke-width="1.7"/><path d="M-3.5 -4.5 H3.5 M-3 -4 L3 1.5 M3 -4 L-3 1.5 M-3 4 L3 -1.5 M3 4 L-3 -1.5" stroke="#111" stroke-width="1.3" fill="none"/><path d="M-4.5 4.6 H4.5" stroke="#111" stroke-width="1.6"/></g>
<g transform="translate(1547.7,760.7)"><circle r="10.3" fill="url(#mg)" stroke="#22423f" stroke-width="1.5"/></g>
<g transform="translate(1527,877.6)"><circle r="10.3" fill="url(#mg)" stroke="#22423f" stroke-width="1.5"/><path d="M-4.8 -3.8 H4.8 V2.8 H3.6 V4.6 L1.8 2.8 H-4.8Z" fill="none" stroke="#123" stroke-width="1.3"/><path d="M-2.8 -1.5 H2.6 M-2.8 0.6 H1" stroke="#123" stroke-width="1"/></g>
<g transform="translate(1599.6,891.4)"><circle r="10.3" fill="url(#mg)" stroke="#22423f" stroke-width="1.5"/></g>
<g transform="translate(1728.7,642.7)"><circle r="10.3" fill="url(#mg)" stroke="#22423f" stroke-width="1.7"/><path d="M-3.6 -4.2 Q-5.2 -3.2 -4.2 -0.5 Q-2.2 3.6 2.2 4.6 Q4.2 4.8 4.6 3.2 L2.6 1.6 L1.4 2.5 Q-0.8 1.5 -1.9 -0.9 L-1 -2.1Z" fill="#123"/></g>
<g transform="translate(1697.7,747.7)"><circle r="10.3" fill="url(#mg)" stroke="#22423f" stroke-width="1.5"/><path d="M-4.8 -3.8 H4.8 V2.8 H3.6 V4.6 L1.8 2.8 H-4.8Z" fill="none" stroke="#123" stroke-width="1.3"/><path d="M-2.8 -1.5 H2.6 M-2.8 0.6 H1" stroke="#123" stroke-width="1"/></g>
<g transform="translate(1654.6,793.3)"><circle r="10.3" fill="url(#mg)" stroke="#22423f" stroke-width="1.5"/><path d="M-4.8 -3.8 H4.8 V2.8 H3.6 V4.6 L1.8 2.8 H-4.8Z" fill="none" stroke="#123" stroke-width="1.3"/><path d="M-2.8 -1.5 H2.6 M-2.8 0.6 H1" stroke="#123" stroke-width="1"/></g>
<g transform="translate(1681.1,800.2)"><circle r="10.3" fill="url(#mg)" stroke="#22423f" stroke-width="1.7"/><path d="M-3.6 -4.2 Q-5.2 -3.2 -4.2 -0.5 Q-2.2 3.6 2.2 4.6 Q4.2 4.8 4.6 3.2 L2.6 1.6 L1.4 2.5 Q-0.8 1.5 -1.9 -0.9 L-1 -2.1Z" fill="#123"/></g>
<g transform="translate(1900,798.3)"><circle r="10.3" fill="url(#mg)" stroke="#22423f" stroke-width="1.7"/><path d="M-3.6 -4.2 Q-5.2 -3.2 -4.2 -0.5 Q-2.2 3.6 2.2 4.6 Q4.2 4.8 4.6 3.2 L2.6 1.6 L1.4 2.5 Q-0.8 1.5 -1.9 -0.9 L-1 -2.1Z" fill="#123"/></g>
<g transform="translate(1810.8,862.4)"><circle r="10.3" fill="url(#mg)" stroke="#22423f" stroke-width="1.5"/></g>
<g transform="translate(1788.1,876.2)"><circle r="10.3" fill="url(#mg)" stroke="#22423f" stroke-width="1.5"/><path d="M-4.8 -3.8 H4.8 V2.8 H3.6 V4.6 L1.8 2.8 H-4.8Z" fill="none" stroke="#123" stroke-width="1.3"/><path d="M-2.8 -1.5 H2.6 M-2.8 0.6 H1" stroke="#123" stroke-width="1"/></g>
<g transform="translate(1850.3,876.2)"><circle r="10.3" fill="url(#mg)" stroke="#22423f" stroke-width="1.5"/><path d="M-4.8 -3.8 H4.8 V2.8 H3.6 V4.6 L1.8 2.8 H-4.8Z" fill="none" stroke="#123" stroke-width="1.3"/><path d="M-2.8 -1.5 H2.6 M-2.8 0.6 H1" stroke="#123" stroke-width="1"/></g>
<g transform="translate(1917,876.2)"><circle r="10.3" fill="url(#mg)" stroke="#22423f" stroke-width="1.5"/></g>
<g transform="translate(1734.2,895.6)"><circle r="10.3" fill="url(#mg)" stroke="#22423f" stroke-width="1.5"/></g></g>
<g transform="translate(1505.1,498.9)"><rect x="-14" y="-14" width="28" height="28" transform="rotate(45)" fill="#a9a9ab" stroke="#1e1e1e" stroke-width="1.6" rx="2.5"/><path d="M-4.6 -4.2 H4.6 M0 -4.2 V5.3" stroke="#000" stroke-width="2.8" fill="none"/></g>
<g transform="translate(1757,136)"><path d="M4 14 L2 9 Q1.5 7.5 3 8 L5 10 V3 Q5 1.8 6.2 1.8 Q7.3 1.8 7.3 3 V7 V1.5 Q7.3 0.3 8.5 0.3 Q9.7 0.3 9.7 1.5 V7 V2 Q9.7 0.9 10.9 0.9 Q12 0.9 12 2 V7.5 V3.5 Q12 2.5 13.1 2.5 Q14.2 2.5 14.2 3.5 V10 Q14.2 14 11.5 16 H6 Z" fill="#fff" stroke="#111" stroke-width="1.1"/></g>
<!-- attribution -->
<rect x="1641" y="877" width="276" height="20" fill="#ffffff" opacity="0.55"/>
<text x="1645" y="891" font-size="12.5" fill="#333" textLength="266" lengthAdjust="spacingAndGlyphs">© Mapbox © OpenStreetMap <tspan fill="#222">Improve this map</tspan></text>
<!-- mapbox logo -->
<g transform="translate(1100,870)"><circle cx="10.3" cy="9.2" r="9.2" fill="#fff" stroke="#777" stroke-width="1.5"/><path d="M6.5 13.5 V9 A4.5 4.5 0 1 1 11 13.5 Z" fill="#777"/><path d="M10.6 6.3 L11.4 8.3 L13.4 9.1 L11.4 9.9 L10.6 11.9 L9.8 9.9 L7.8 9.1 L9.8 8.3Z" fill="#fff"/><text x="24" y="14" font-size="15.5" font-weight="bold" fill="#fff" stroke="#777" stroke-width="1.3" paint-order="stroke" textLength="60" lengthAdjust="spacingAndGlyphs">mapbox</text></g>
<!-- controls -->
<g>
<rect x="1877" y="705" width="30" height="29" rx="4" fill="#fff"/>
<rect x="1877" y="737" width="30" height="29" rx="4" fill="#fff"/>
<rect x="1877" y="768" width="30" height="29" rx="4" fill="#fff"/>
<rect x="1877" y="808" width="30" height="59" rx="4" fill="#fff"/>
<path d="M1878 837.5 H1906" stroke="#ddd" stroke-width="1"/>
<rect x="1885" y="712" width="15" height="15" fill="none" stroke="#333" stroke-width="1.3"/><path d="M1892.5 712 V727 M1885 719.5 H1900" stroke="#333" stroke-width="1.3"/>
<path d="M1884 759 L1890 745 M1900 745 L1906 759 M1895 745 V749 M1895 752 V758" stroke="#333" stroke-width="1.3" fill="none"/>
<circle cx="1892" cy="782" r="6" fill="none" stroke="#333" stroke-width="1.3"/><circle cx="1892" cy="782" r="2.3" fill="#333"/><path d="M1892 773.5 V776 M1892 788 V790.5 M1883.5 782 H1886 M1898 782 H1900.5" stroke="#333" stroke-width="1.3"/>
<path d="M1886 822.5 H1898 M1892 816.5 V828.5" stroke="#333" stroke-width="2"/>
<path d="M1886 852 H1898" stroke="#333" stroke-width="2"/>
</g>

</svg></div>
<div class="a" style="left:1103px;top:69px;font-size:14.5px;color:#1a9e92;line-height:18px">Shipments Map</div>
<div class="a" style="left:1715px;top:61px;width:1px;height:36px;background:#dedede"></div>
<div class="a" style="left:1755px;top:61px;width:1px;height:36px;background:#dedede"></div>
<div class="a" style="left:1796px;top:61px;width:1px;height:36px;background:#dedede"></div>
<div class="a" style="left:1836px;top:61px;width:1px;height:36px;background:#dedede"></div>
<div class="a" style="left:1877px;top:61px;width:1px;height:36px;background:#dedede"></div>
<svg class="a" style="left:1727px;top:70px" width="16" height="16" viewBox="0 0 16 16"><rect x="1.5" y="1.5" width="13" height="13" fill="none" stroke="#444" stroke-width="1.6"/></svg>
<svg class="a" style="left:1767px;top:70px" width="18" height="16" viewBox="0 0 18 16"><path d="M3.9 2.6 L14.2 5.3 L12 9.6 L5.5 12.8 Z" fill="none" stroke="#555" stroke-width="1.1"/><g fill="#fff" stroke="#555" stroke-width="1"><circle cx="3.9" cy="2.6" r="1.5"/><circle cx="14.2" cy="5.3" r="1.5"/><circle cx="12" cy="9.6" r="1.3"/><circle cx="5.5" cy="12.8" r="1.5"/></g></svg>
<svg class="a" style="left:1808px;top:70px" width="17" height="17" viewBox="0 0 17 17"><rect x="1" y="6" width="15" height="5" rx="1" transform="rotate(-45 8.5 8.5)" fill="none" stroke="#555" stroke-width="1.3"/><path d="M6 9 L7.5 10.5 M8 7 L9.5 8.5 M10 5 L11.5 6.5" stroke="#555" stroke-width="1"/></svg>
<svg class="a" style="left:1850px;top:69px" width="15" height="17" viewBox="0 0 15 17"><path d="M1 3.5 H14 M5 3.5 V1.5 H10 V3.5" fill="none" stroke="#555" stroke-width="1.4"/><path d="M2.5 4 L3.5 15.5 H11.5 L12.5 4" fill="none" stroke="#555" stroke-width="1.4"/><path d="M5.5 6 V13.5 M7.5 6 V13.5 M9.5 6 V13.5" stroke="#555" stroke-width="1.1"/></svg>
<svg class="a" style="left:1890px;top:73px" width="12" height="12" viewBox="0 0 12 12"><path d="M1.8 4.2 V1.8 H4.2 M7.8 1.8 H10.2 V4.2 M10.2 7.8 V10.2 H7.8 M4.2 10.2 H1.8 V7.8" fill="none" stroke="#666" stroke-width="1.6"/></svg>

<!-- KPI -->
<div class="a panel" style="left:17px;top:905px;width:1900px;height:53px"></div>

<!-- KPI CONTENT -->
<div class="a" style="left:35px;top:922px;font-size:16px;color:#1a9e92;line-height:20px;-webkit-text-stroke:0.3px">KPI</div>
<div class="kv" style="left:44.5px;top:913px">30</div><div class="kl" style="left:44.5px;top:934px">Routes</div>
<div class="kv" style="left:152.4px;top:913px">1,956</div><div class="kl" style="left:152.4px;top:934px">Total Miles</div>
<div class="kv" style="left:274.2px;top:913px">171</div><div class="kl" style="left:274.2px;top:934px">Total hours</div>
<div class="kv" style="left:392.7px;top:913px">491</div><div class="kl" style="left:392.7px;top:934px">Total Bills</div>
<div class="kv" style="left:515.5px;top:913px">427</div><div class="kl" style="left:515.5px;top:934px">Delivery Bills</div>
<div class="kv" style="left:637.0px;top:913px">64</div><div class="kl" style="left:637.0px;top:934px">Trap Bills</div>
<div class="kv" style="left:735.0px;top:913px">388</div><div class="kl" style="left:735.0px;top:934px">Stops</div>
<div class="kv" style="left:842.0px;top:913px"><span style="color:#1f9e80">14.2</span><span style="color:#666"> / 10.0</span></div><div class="kl" style="left:831.8px;top:934px">Bills/Trip</div>
<div class="kv" style="left:965.4px;top:913px"><span style="color:#1f9e80">5.0</span><span style="color:#666"> / 9.0</span></div><div class="kl" style="left:965.4px;top:934px">Miles/Stop</div>
<div class="kv" style="left:1080.0px;top:913px">1.1</div><div class="kl" style="left:1080.0px;top:934px">Bills/Stop</div>
<div class="kv" style="left:1193.4px;top:913px"><span style="color:#c2504a">2.5</span><span style="color:#666"> / 4.0</span></div><div class="kl" style="left:1193.4px;top:934px">Bills/Hour</div>
<div class="kv" style="left:1313.0px;top:913px"><span style="color:#c2504a">2.3</span><span style="color:#666"> / 5.0</span></div><div class="kl" style="left:1313.0px;top:934px">Stops/Hour</div>
<div class="kv" style="left:1439.0px;top:913px"><span style="color:#c2504a">31</span></div><div class="kl" style="left:1439.0px;top:934px">Missed Apts</div>
<div class="kv" style="left:1561.5px;top:913px">$17,442</div><div class="kl" style="left:1561.5px;top:934px">Total Cost</div>
<div class="a" style="left:1842px;top:920px;width:90px;height:37px;background:#0c6665;border-radius:18px"></div>
<svg class="a" style="left:1850px;top:930px" width="18" height="18" viewBox="0 0 18 18"><circle cx="9" cy="9" r="7.3" fill="none" stroke="#fff" stroke-width="1.3"/><path d="M6.8 7 Q6.9 4.8 9 4.8 Q11.1 4.8 11.1 6.8 Q11.1 8.2 9.2 9 L9.1 10.6" fill="none" stroke="#fff" stroke-width="1.5"/><circle cx="9.1" cy="12.8" r="0.95" fill="#fff"/></svg>
<div class="a" style="left:1873px;top:929px;font-size:15px;font-weight:bold;color:#fff;line-height:18px">Help</div>
</body></html>
